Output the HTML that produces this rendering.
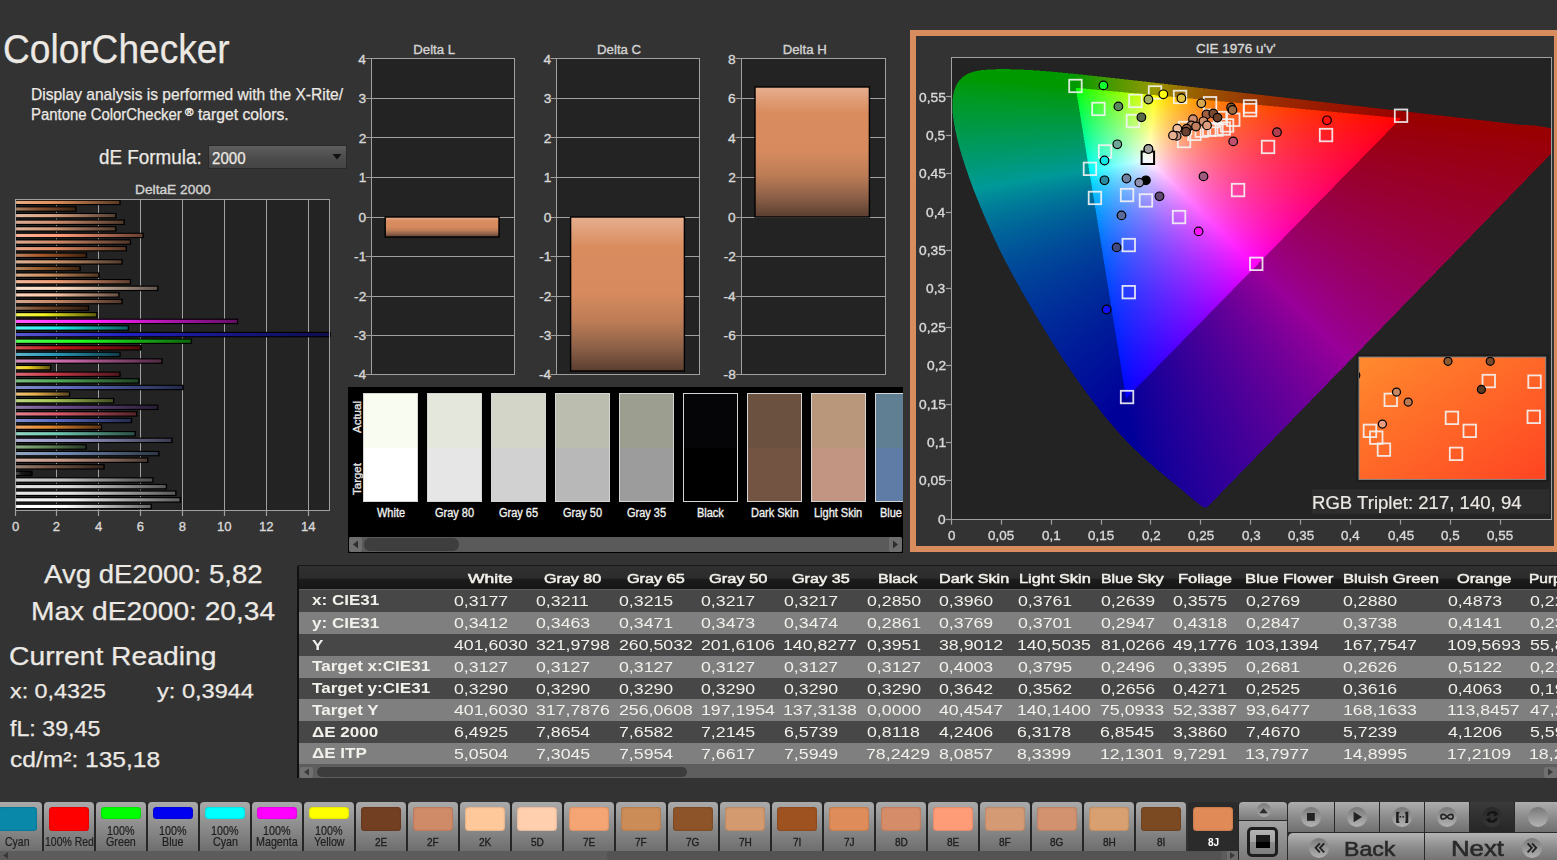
<!DOCTYPE html><html><head><meta charset="utf-8"><style>
html,body{margin:0;padding:0;width:1557px;height:860px;overflow:hidden;background:#333333;}
body{position:relative;font-family:"Liberation Sans",sans-serif;}
.t{position:absolute;white-space:nowrap;transform-origin:0 0;}
.a{position:absolute;}
svg{position:absolute;overflow:visible;}
</style></head><body>
<div class="t" style="left:2.75px;top:27.00px;font-size:40.12px;line-height:45px;color:#ece9e4;transform:scaleX(0.9246);-webkit-text-stroke:0.25px;">ColorChecker</div>
<div class="t" style="left:30.86px;top:83.70px;font-size:17.15px;line-height:20px;color:#ece9e4;transform:scaleX(0.9073);-webkit-text-stroke:0.25px;">Display analysis is performed with the X-Rite/</div>
<div class="t" style="left:30.91px;top:105.80px;font-size:15.84px;line-height:17px;color:#ece9e4;transform:scaleX(0.9417);-webkit-text-stroke:0.25px;">Pantone ColorChecker</div>
<div class="t" style="left:184.59px;top:106.40px;font-size:10.90px;line-height:12px;color:#ece9e4;transform:scaleX(1.0447);-webkit-text-stroke:0.45px;">®</div>
<div class="t" style="left:197.94px;top:105.80px;font-size:15.84px;line-height:17px;color:#ece9e4;transform:scaleX(0.9901);-webkit-text-stroke:0.25px;">target colors.</div>
<div class="t" style="left:99.25px;top:144.70px;font-size:20.64px;line-height:23px;color:#ece9e4;transform:scaleX(0.9144);-webkit-text-stroke:0.25px;">dE Formula:</div>
<div class="a" style="left:208px;top:145px;width:139px;height:24px;background:linear-gradient(#5e5e5e,#4a4a4a 60%,#444);box-sizing:border-box;border:1px solid #2a2a2a;"></div>
<div class="t" style="left:212.25px;top:150.40px;font-size:15.70px;line-height:17px;color:#ece9e4;transform:scaleX(0.9615);-webkit-text-stroke:0.25px;">2000</div>
<svg style="left:0;top:0" width="1" height="1"><polygon points="332.5,154 341.5,154 337,159.5" fill="#111"/></svg>
<div class="t" style="left:134.80px;top:181.90px;font-size:13.37px;line-height:15px;color:#d4d4d4;transform:scaleX(1.0295);-webkit-text-stroke:0.35px;">DeltaE 2000</div>
<svg style="left:0;top:0" width="1557" height="860"><defs><linearGradient id="bg0" x1="0" y1="0" x2="1" y2="0"><stop offset="0" stop-color="#e8ac83"/><stop offset="0.35" stop-color="#e0905a"/><stop offset="1" stop-color="#5a3a24"/></linearGradient><linearGradient id="bg1" x1="0" y1="0" x2="1" y2="0"><stop offset="0" stop-color="#a77f64"/><stop offset="0.35" stop-color="#8a5430"/><stop offset="1" stop-color="#372213"/></linearGradient><linearGradient id="bg2" x1="0" y1="0" x2="1" y2="0"><stop offset="0" stop-color="#e2b8a0"/><stop offset="0.35" stop-color="#d8a080"/><stop offset="1" stop-color="#564033"/></linearGradient><linearGradient id="bg3" x1="0" y1="0" x2="1" y2="0"><stop offset="0" stop-color="#dcac94"/><stop offset="0.35" stop-color="#d09070"/><stop offset="1" stop-color="#533a2d"/></linearGradient><linearGradient id="bg4" x1="0" y1="0" x2="1" y2="0"><stop offset="0" stop-color="#dcb29a"/><stop offset="0.35" stop-color="#d09878"/><stop offset="1" stop-color="#533d30"/></linearGradient><linearGradient id="bg5" x1="0" y1="0" x2="1" y2="0"><stop offset="0" stop-color="#ffb39a"/><stop offset="0.35" stop-color="#ff9a78"/><stop offset="1" stop-color="#663e30"/></linearGradient><linearGradient id="bg6" x1="0" y1="0" x2="1" y2="0"><stop offset="0" stop-color="#dca78e"/><stop offset="0.35" stop-color="#d08a68"/><stop offset="1" stop-color="#53372a"/></linearGradient><linearGradient id="bg7" x1="0" y1="0" x2="1" y2="0"><stop offset="0" stop-color="#e8a788"/><stop offset="0.35" stop-color="#e08a60"/><stop offset="1" stop-color="#5a3726"/></linearGradient><linearGradient id="bg8" x1="0" y1="0" x2="1" y2="0"><stop offset="0" stop-color="#be835e"/><stop offset="0.35" stop-color="#a85a28"/><stop offset="1" stop-color="#432410"/></linearGradient><linearGradient id="bg9" x1="0" y1="0" x2="1" y2="0"><stop offset="0" stop-color="#dcb294"/><stop offset="0.35" stop-color="#d09870"/><stop offset="1" stop-color="#533d2d"/></linearGradient><linearGradient id="bg10" x1="0" y1="0" x2="1" y2="0"><stop offset="0" stop-color="#b38864"/><stop offset="0.35" stop-color="#9a6030"/><stop offset="1" stop-color="#3e2613"/></linearGradient><linearGradient id="bg11" x1="0" y1="0" x2="1" y2="0"><stop offset="0" stop-color="#dcac88"/><stop offset="0.35" stop-color="#d09060"/><stop offset="1" stop-color="#533a26"/></linearGradient><linearGradient id="bg12" x1="0" y1="0" x2="1" y2="0"><stop offset="0" stop-color="#f4b89a"/><stop offset="0.35" stop-color="#f0a078"/><stop offset="1" stop-color="#604030"/></linearGradient><linearGradient id="bg13" x1="0" y1="0" x2="1" y2="0"><stop offset="0" stop-color="#fae2d0"/><stop offset="0.35" stop-color="#f8d8c0"/><stop offset="1" stop-color="#63564d"/></linearGradient><linearGradient id="bg14" x1="0" y1="0" x2="1" y2="0"><stop offset="0" stop-color="#ffd6be"/><stop offset="0.35" stop-color="#ffc8a8"/><stop offset="1" stop-color="#665043"/></linearGradient><linearGradient id="bg15" x1="0" y1="0" x2="1" y2="0"><stop offset="0" stop-color="#d6a78f"/><stop offset="0.35" stop-color="#c88a6a"/><stop offset="1" stop-color="#50372a"/></linearGradient><linearGradient id="bg16" x1="0" y1="0" x2="1" y2="0"><stop offset="0" stop-color="#9b775f"/><stop offset="0.35" stop-color="#7a4a2a"/><stop offset="1" stop-color="#311e11"/></linearGradient><linearGradient id="bg17" x1="0" y1="0" x2="1" y2="0"><stop offset="0" stop-color="#f4f458"/><stop offset="0.35" stop-color="#f0f020"/><stop offset="1" stop-color="#60600d"/></linearGradient><linearGradient id="bg18" x1="0" y1="0" x2="1" y2="0"><stop offset="0" stop-color="#ff58ff"/><stop offset="0.35" stop-color="#ff20ff"/><stop offset="1" stop-color="#660d66"/></linearGradient><linearGradient id="bg19" x1="0" y1="0" x2="1" y2="0"><stop offset="0" stop-color="#58f4f4"/><stop offset="0.35" stop-color="#20f0f0"/><stop offset="1" stop-color="#0d6060"/></linearGradient><linearGradient id="bg20" x1="0" y1="0" x2="1" y2="0"><stop offset="0" stop-color="#5858d0"/><stop offset="0.35" stop-color="#2020c0"/><stop offset="1" stop-color="#0d0d4d"/></linearGradient><linearGradient id="bg21" x1="0" y1="0" x2="1" y2="0"><stop offset="0" stop-color="#58ff58"/><stop offset="0.35" stop-color="#20ff20"/><stop offset="1" stop-color="#0d660d"/></linearGradient><linearGradient id="bg22" x1="0" y1="0" x2="1" y2="0"><stop offset="0" stop-color="#d05252"/><stop offset="0.35" stop-color="#c01818"/><stop offset="1" stop-color="#4d0a0a"/></linearGradient><linearGradient id="bg23" x1="0" y1="0" x2="1" y2="0"><stop offset="0" stop-color="#5fb3ca"/><stop offset="0.35" stop-color="#2a9ab8"/><stop offset="1" stop-color="#113e4a"/></linearGradient><linearGradient id="bg24" x1="0" y1="0" x2="1" y2="0"><stop offset="0" stop-color="#d68ebe"/><stop offset="0.35" stop-color="#c868a8"/><stop offset="1" stop-color="#502a43"/></linearGradient><linearGradient id="bg25" x1="0" y1="0" x2="1" y2="0"><stop offset="0" stop-color="#f4dc58"/><stop offset="0.35" stop-color="#f0d020"/><stop offset="1" stop-color="#60530d"/></linearGradient><linearGradient id="bg26" x1="0" y1="0" x2="1" y2="0"><stop offset="0" stop-color="#d66b76"/><stop offset="0.35" stop-color="#c83a48"/><stop offset="1" stop-color="#50171d"/></linearGradient><linearGradient id="bg27" x1="0" y1="0" x2="1" y2="0"><stop offset="0" stop-color="#7cbe82"/><stop offset="0.35" stop-color="#50a858"/><stop offset="1" stop-color="#204323"/></linearGradient><linearGradient id="bg28" x1="0" y1="0" x2="1" y2="0"><stop offset="0" stop-color="#838eca"/><stop offset="0.35" stop-color="#5a68b8"/><stop offset="1" stop-color="#242a4a"/></linearGradient><linearGradient id="bg29" x1="0" y1="0" x2="1" y2="0"><stop offset="0" stop-color="#eec47c"/><stop offset="0.35" stop-color="#e8b050"/><stop offset="1" stop-color="#5d4620"/></linearGradient><linearGradient id="bg30" x1="0" y1="0" x2="1" y2="0"><stop offset="0" stop-color="#bed682"/><stop offset="0.35" stop-color="#a8c858"/><stop offset="1" stop-color="#435023"/></linearGradient><linearGradient id="bg31" x1="0" y1="0" x2="1" y2="0"><stop offset="0" stop-color="#8f77a6"/><stop offset="0.35" stop-color="#6a4a88"/><stop offset="1" stop-color="#2a1e36"/></linearGradient><linearGradient id="bg32" x1="0" y1="0" x2="1" y2="0"><stop offset="0" stop-color="#e2838f"/><stop offset="0.35" stop-color="#d85a6a"/><stop offset="1" stop-color="#56242a"/></linearGradient><linearGradient id="bg33" x1="0" y1="0" x2="1" y2="0"><stop offset="0" stop-color="#838fd0"/><stop offset="0.35" stop-color="#5a6ac0"/><stop offset="1" stop-color="#242a4d"/></linearGradient><linearGradient id="bg34" x1="0" y1="0" x2="1" y2="0"><stop offset="0" stop-color="#eea764"/><stop offset="0.35" stop-color="#e88a30"/><stop offset="1" stop-color="#5d3713"/></linearGradient><linearGradient id="bg35" x1="0" y1="0" x2="1" y2="0"><stop offset="0" stop-color="#94d6c4"/><stop offset="0.35" stop-color="#70c8b0"/><stop offset="1" stop-color="#2d5046"/></linearGradient><linearGradient id="bg36" x1="0" y1="0" x2="1" y2="0"><stop offset="0" stop-color="#b2b2d6"/><stop offset="0.35" stop-color="#9898c8"/><stop offset="1" stop-color="#3d3d50"/></linearGradient><linearGradient id="bg37" x1="0" y1="0" x2="1" y2="0"><stop offset="0" stop-color="#8fac88"/><stop offset="0.35" stop-color="#6a9060"/><stop offset="1" stop-color="#2a3a26"/></linearGradient><linearGradient id="bg38" x1="0" y1="0" x2="1" y2="0"><stop offset="0" stop-color="#94a6c4"/><stop offset="0.35" stop-color="#7088b0"/><stop offset="1" stop-color="#2d3646"/></linearGradient><linearGradient id="bg39" x1="0" y1="0" x2="1" y2="0"><stop offset="0" stop-color="#d6b3a6"/><stop offset="0.35" stop-color="#c89a88"/><stop offset="1" stop-color="#503e36"/></linearGradient><linearGradient id="bg40" x1="0" y1="0" x2="1" y2="0"><stop offset="0" stop-color="#9b8376"/><stop offset="0.35" stop-color="#7a5a48"/><stop offset="1" stop-color="#31241d"/></linearGradient><linearGradient id="bg41" x1="0" y1="0" x2="1" y2="0"><stop offset="0" stop-color="#525252"/><stop offset="0.35" stop-color="#181818"/><stop offset="1" stop-color="#0a0a0a"/></linearGradient><linearGradient id="bg42" x1="0" y1="0" x2="1" y2="0"><stop offset="0" stop-color="#d0d0d0"/><stop offset="0.35" stop-color="#c0c0c0"/><stop offset="1" stop-color="#4d4d4d"/></linearGradient><linearGradient id="bg43" x1="0" y1="0" x2="1" y2="0"><stop offset="0" stop-color="#e2e2e2"/><stop offset="0.35" stop-color="#d8d8d8"/><stop offset="1" stop-color="#565656"/></linearGradient><linearGradient id="bg44" x1="0" y1="0" x2="1" y2="0"><stop offset="0" stop-color="#e8e8e8"/><stop offset="0.35" stop-color="#e0e0e0"/><stop offset="1" stop-color="#5a5a5a"/></linearGradient><linearGradient id="bg45" x1="0" y1="0" x2="1" y2="0"><stop offset="0" stop-color="#f4f4f4"/><stop offset="0.35" stop-color="#f0f0f0"/><stop offset="1" stop-color="#606060"/></linearGradient><linearGradient id="bg46" x1="0" y1="0" x2="1" y2="0"><stop offset="0" stop-color="#ffffff"/><stop offset="0.35" stop-color="#ffffff"/><stop offset="1" stop-color="#666666"/></linearGradient></defs><rect x="15.5" y="199.4" width="313.9" height="310.9" fill="#232323"/><line x1="56.5" y1="199.5" x2="56.5" y2="510.5" stroke="#a0a0a0" stroke-width="1"/><line x1="98.5" y1="199.5" x2="98.5" y2="510.5" stroke="#a0a0a0" stroke-width="1"/><line x1="140.5" y1="199.5" x2="140.5" y2="510.5" stroke="#a0a0a0" stroke-width="1"/><line x1="182.5" y1="199.5" x2="182.5" y2="510.5" stroke="#a0a0a0" stroke-width="1"/><line x1="224.5" y1="199.5" x2="224.5" y2="510.5" stroke="#a0a0a0" stroke-width="1"/><line x1="266.5" y1="199.5" x2="266.5" y2="510.5" stroke="#a0a0a0" stroke-width="1"/><line x1="308.5" y1="199.5" x2="308.5" y2="510.5" stroke="#a0a0a0" stroke-width="1"/><line x1="15.5" y1="510.5" x2="15.5" y2="516.0" stroke="#a0a0a0" stroke-width="1.2"/><line x1="56.5" y1="510.5" x2="56.5" y2="516.0" stroke="#a0a0a0" stroke-width="1.2"/><line x1="98.5" y1="510.5" x2="98.5" y2="516.0" stroke="#a0a0a0" stroke-width="1.2"/><line x1="140.5" y1="510.5" x2="140.5" y2="516.0" stroke="#a0a0a0" stroke-width="1.2"/><line x1="182.5" y1="510.5" x2="182.5" y2="516.0" stroke="#a0a0a0" stroke-width="1.2"/><line x1="224.5" y1="510.5" x2="224.5" y2="516.0" stroke="#a0a0a0" stroke-width="1.2"/><line x1="266.5" y1="510.5" x2="266.5" y2="516.0" stroke="#a0a0a0" stroke-width="1.2"/><line x1="308.5" y1="510.5" x2="308.5" y2="516.0" stroke="#a0a0a0" stroke-width="1.2"/><rect x="16.10" y="199.65" width="104.60" height="5.5" fill="#000"/><rect x="16.10" y="200.80" width="103.20" height="3.2" fill="url(#bg0)"/><rect x="16.10" y="206.26" width="60.50" height="5.5" fill="#000"/><rect x="16.10" y="207.41" width="59.10" height="3.2" fill="url(#bg1)"/><rect x="16.10" y="212.87" width="100.40" height="5.5" fill="#000"/><rect x="16.10" y="214.02" width="99.00" height="3.2" fill="url(#bg2)"/><rect x="16.10" y="219.48" width="108.80" height="5.5" fill="#000"/><rect x="16.10" y="220.63" width="107.40" height="3.2" fill="url(#bg3)"/><rect x="16.10" y="226.09" width="100.40" height="5.5" fill="#000"/><rect x="16.10" y="227.24" width="99.00" height="3.2" fill="url(#bg4)"/><rect x="16.10" y="232.70" width="127.70" height="5.5" fill="#000"/><rect x="16.10" y="233.85" width="126.30" height="3.2" fill="url(#bg5)"/><rect x="16.10" y="239.31" width="115.10" height="5.5" fill="#000"/><rect x="16.10" y="240.46" width="113.70" height="3.2" fill="url(#bg6)"/><rect x="16.10" y="245.92" width="110.90" height="5.5" fill="#000"/><rect x="16.10" y="247.07" width="109.50" height="3.2" fill="url(#bg7)"/><rect x="16.10" y="252.53" width="71.00" height="5.5" fill="#000"/><rect x="16.10" y="253.68" width="69.60" height="3.2" fill="url(#bg8)"/><rect x="16.10" y="259.14" width="106.70" height="5.5" fill="#000"/><rect x="16.10" y="260.29" width="105.30" height="3.2" fill="url(#bg9)"/><rect x="16.10" y="265.75" width="64.70" height="5.5" fill="#000"/><rect x="16.10" y="266.90" width="63.30" height="3.2" fill="url(#bg10)"/><rect x="16.10" y="272.36" width="83.60" height="5.5" fill="#000"/><rect x="16.10" y="273.51" width="82.20" height="3.2" fill="url(#bg11)"/><rect x="16.10" y="278.97" width="115.10" height="5.5" fill="#000"/><rect x="16.10" y="280.12" width="113.70" height="3.2" fill="url(#bg12)"/><rect x="16.10" y="285.58" width="142.40" height="5.5" fill="#000"/><rect x="16.10" y="286.73" width="141.00" height="3.2" fill="url(#bg13)"/><rect x="16.10" y="292.19" width="103.55" height="5.5" fill="#000"/><rect x="16.10" y="293.34" width="102.15" height="3.2" fill="url(#bg14)"/><rect x="16.10" y="298.80" width="106.70" height="5.5" fill="#000"/><rect x="16.10" y="299.95" width="105.30" height="3.2" fill="url(#bg15)"/><rect x="16.10" y="305.41" width="73.10" height="5.5" fill="#000"/><rect x="16.10" y="306.56" width="71.70" height="3.2" fill="url(#bg16)"/><rect x="16.10" y="312.02" width="81.50" height="5.5" fill="#000"/><rect x="16.10" y="313.17" width="80.10" height="3.2" fill="url(#bg17)"/><rect x="16.10" y="318.63" width="222.20" height="5.5" fill="#000"/><rect x="16.10" y="319.78" width="220.80" height="3.2" fill="url(#bg18)"/><rect x="16.10" y="325.24" width="113.00" height="5.5" fill="#000"/><rect x="16.10" y="326.39" width="111.60" height="3.2" fill="url(#bg19)"/><rect x="16.10" y="331.85" width="314.60" height="5.5" fill="#000"/><rect x="16.10" y="333.00" width="313.20" height="3.2" fill="url(#bg20)"/><rect x="16.10" y="338.46" width="176.00" height="5.5" fill="#000"/><rect x="16.10" y="339.61" width="174.60" height="3.2" fill="url(#bg21)"/><rect x="16.10" y="345.07" width="125.60" height="5.5" fill="#000"/><rect x="16.10" y="346.22" width="124.20" height="3.2" fill="url(#bg22)"/><rect x="16.10" y="351.68" width="104.60" height="5.5" fill="#000"/><rect x="16.10" y="352.83" width="103.20" height="3.2" fill="url(#bg23)"/><rect x="16.10" y="358.29" width="146.60" height="5.5" fill="#000"/><rect x="16.10" y="359.44" width="145.20" height="3.2" fill="url(#bg24)"/><rect x="16.10" y="364.90" width="35.30" height="5.5" fill="#000"/><rect x="16.10" y="366.05" width="33.90" height="3.2" fill="url(#bg25)"/><rect x="16.10" y="371.51" width="104.60" height="5.5" fill="#000"/><rect x="16.10" y="372.66" width="103.20" height="3.2" fill="url(#bg26)"/><rect x="16.10" y="378.12" width="123.50" height="5.5" fill="#000"/><rect x="16.10" y="379.27" width="122.10" height="3.2" fill="url(#bg27)"/><rect x="16.10" y="384.73" width="167.60" height="5.5" fill="#000"/><rect x="16.10" y="385.88" width="166.20" height="3.2" fill="url(#bg28)"/><rect x="16.10" y="391.34" width="54.20" height="5.5" fill="#000"/><rect x="16.10" y="392.49" width="52.80" height="3.2" fill="url(#bg29)"/><rect x="16.10" y="397.95" width="98.30" height="5.5" fill="#000"/><rect x="16.10" y="399.10" width="96.90" height="3.2" fill="url(#bg30)"/><rect x="16.10" y="404.56" width="142.40" height="5.5" fill="#000"/><rect x="16.10" y="405.71" width="141.00" height="3.2" fill="url(#bg31)"/><rect x="16.10" y="411.17" width="121.40" height="5.5" fill="#000"/><rect x="16.10" y="412.32" width="120.00" height="3.2" fill="url(#bg32)"/><rect x="16.10" y="417.78" width="116.15" height="5.5" fill="#000"/><rect x="16.10" y="418.93" width="114.75" height="3.2" fill="url(#bg33)"/><rect x="16.10" y="424.39" width="86.12" height="5.5" fill="#000"/><rect x="16.10" y="425.54" width="84.72" height="3.2" fill="url(#bg34)"/><rect x="16.10" y="431.00" width="119.72" height="5.5" fill="#000"/><rect x="16.10" y="432.15" width="118.32" height="3.2" fill="url(#bg35)"/><rect x="16.10" y="437.61" width="156.47" height="5.5" fill="#000"/><rect x="16.10" y="438.76" width="155.07" height="3.2" fill="url(#bg36)"/><rect x="16.10" y="444.22" width="70.79" height="5.5" fill="#000"/><rect x="16.10" y="445.37" width="69.39" height="3.2" fill="url(#bg37)"/><rect x="16.10" y="450.83" width="143.45" height="5.5" fill="#000"/><rect x="16.10" y="451.98" width="142.05" height="3.2" fill="url(#bg38)"/><rect x="16.10" y="457.44" width="132.32" height="5.5" fill="#000"/><rect x="16.10" y="458.59" width="130.92" height="3.2" fill="url(#bg39)"/><rect x="16.10" y="464.05" width="88.64" height="5.5" fill="#000"/><rect x="16.10" y="465.20" width="87.24" height="3.2" fill="url(#bg40)"/><rect x="16.10" y="470.66" width="16.61" height="5.5" fill="#000"/><rect x="16.10" y="471.81" width="15.21" height="3.2" fill="url(#bg41)"/><rect x="16.10" y="477.27" width="137.57" height="5.5" fill="#000"/><rect x="16.10" y="478.42" width="136.17" height="3.2" fill="url(#bg42)"/><rect x="16.10" y="483.88" width="151.01" height="5.5" fill="#000"/><rect x="16.10" y="485.03" width="149.61" height="3.2" fill="url(#bg43)"/><rect x="16.10" y="490.49" width="160.46" height="5.5" fill="#000"/><rect x="16.10" y="491.64" width="159.06" height="3.2" fill="url(#bg44)"/><rect x="16.10" y="497.10" width="164.87" height="5.5" fill="#000"/><rect x="16.10" y="498.25" width="163.47" height="3.2" fill="url(#bg45)"/><rect x="16.10" y="503.71" width="135.89" height="5.5" fill="#000"/><rect x="16.10" y="504.86" width="134.49" height="3.2" fill="url(#bg46)"/><rect x="15.5" y="199.5" width="314" height="311" fill="none" stroke="#a0a0a0" stroke-width="1"/></svg>
<div class="t" style="left:11.90px;top:519.00px;font-size:13.08px;line-height:15px;color:#d8d8d8;transform:scaleX(1.0000);-webkit-text-stroke:0.35px;">0</div>
<div class="t" style="left:52.84px;top:519.00px;font-size:13.08px;line-height:15px;color:#d8d8d8;transform:scaleX(1.0000);-webkit-text-stroke:0.35px;">2</div>
<div class="t" style="left:94.90px;top:519.00px;font-size:13.08px;line-height:15px;color:#d8d8d8;transform:scaleX(1.0000);-webkit-text-stroke:0.35px;">4</div>
<div class="t" style="left:136.77px;top:519.00px;font-size:13.08px;line-height:15px;color:#d8d8d8;transform:scaleX(1.0000);-webkit-text-stroke:0.35px;">6</div>
<div class="t" style="left:178.84px;top:519.00px;font-size:13.08px;line-height:15px;color:#d8d8d8;transform:scaleX(1.0000);-webkit-text-stroke:0.35px;">8</div>
<div class="t" style="left:216.98px;top:519.00px;font-size:13.08px;line-height:15px;color:#d8d8d8;transform:scaleX(1.0000);-webkit-text-stroke:0.35px;">10</div>
<div class="t" style="left:259.04px;top:519.00px;font-size:13.08px;line-height:15px;color:#d8d8d8;transform:scaleX(1.0000);-webkit-text-stroke:0.35px;">12</div>
<div class="t" style="left:300.91px;top:519.00px;font-size:13.08px;line-height:15px;color:#d8d8d8;transform:scaleX(1.0000);-webkit-text-stroke:0.35px;">14</div>
<svg style="left:0;top:0" width="1557" height="860"><defs><linearGradient id="dl" x1="0" y1="0" x2="0" y2="1"><stop offset="0" stop-color="#e6ae8e"/><stop offset="0.2" stop-color="#d98c5e"/><stop offset="0.5" stop-color="#d68a5e"/><stop offset="0.68" stop-color="#bc7c56"/><stop offset="0.85" stop-color="#8c6048"/><stop offset="1" stop-color="#5a3e30"/></linearGradient></defs><rect x="371.6" y="58.6" width="142.9" height="315.4" fill="#232323"/><line x1="365.5" y1="58.5" x2="514.5" y2="58.5" stroke="#a0a0a0" stroke-width="1"/><line x1="365.5" y1="98.5" x2="514.5" y2="98.5" stroke="#a0a0a0" stroke-width="1"/><line x1="365.5" y1="137.5" x2="514.5" y2="137.5" stroke="#a0a0a0" stroke-width="1"/><line x1="365.5" y1="177.5" x2="514.5" y2="177.5" stroke="#a0a0a0" stroke-width="1"/><line x1="365.5" y1="217.5" x2="514.5" y2="217.5" stroke="#a0a0a0" stroke-width="1"/><line x1="365.5" y1="256.5" x2="514.5" y2="256.5" stroke="#a0a0a0" stroke-width="1"/><line x1="365.5" y1="296.5" x2="514.5" y2="296.5" stroke="#a0a0a0" stroke-width="1"/><line x1="365.5" y1="335.5" x2="514.5" y2="335.5" stroke="#a0a0a0" stroke-width="1"/><line x1="365.5" y1="374.5" x2="514.5" y2="374.5" stroke="#a0a0a0" stroke-width="1"/><rect x="385.2" y="217.0" width="113.8" height="20.0" fill="url(#dl)" stroke="#000" stroke-width="1.4"/><rect x="371.5" y="58.5" width="143.0" height="316.0" fill="none" stroke="#a0a0a0" stroke-width="1"/></svg>
<div class="t" style="left:413.25px;top:41.90px;font-size:13.23px;line-height:15px;color:#d4d4d4;transform:scaleX(1.0000);-webkit-text-stroke:0.35px;">Delta L</div>
<div class="t" style="left:358.36px;top:51.50px;font-size:13.66px;line-height:15px;color:#d8d8d8;transform:scaleX(1.0000);-webkit-text-stroke:0.35px;">4</div>
<div class="t" style="left:358.50px;top:91.00px;font-size:13.66px;line-height:15px;color:#d8d8d8;transform:scaleX(1.0000);-webkit-text-stroke:0.35px;">3</div>
<div class="t" style="left:358.63px;top:130.70px;font-size:13.66px;line-height:15px;color:#d8d8d8;transform:scaleX(1.0000);-webkit-text-stroke:0.35px;">2</div>
<div class="t" style="left:358.63px;top:170.10px;font-size:13.66px;line-height:15px;color:#d8d8d8;transform:scaleX(1.0000);-webkit-text-stroke:0.35px;">1</div>
<div class="t" style="left:358.50px;top:209.80px;font-size:13.66px;line-height:15px;color:#d8d8d8;transform:scaleX(1.0000);-webkit-text-stroke:0.35px;">0</div>
<div class="t" style="left:354.12px;top:249.30px;font-size:13.66px;line-height:15px;color:#d8d8d8;transform:scaleX(1.0000);-webkit-text-stroke:0.35px;">-1</div>
<div class="t" style="left:354.12px;top:289.00px;font-size:13.66px;line-height:15px;color:#d8d8d8;transform:scaleX(1.0000);-webkit-text-stroke:0.35px;">-2</div>
<div class="t" style="left:353.99px;top:328.40px;font-size:13.66px;line-height:15px;color:#d8d8d8;transform:scaleX(1.0000);-webkit-text-stroke:0.35px;">-3</div>
<div class="t" style="left:353.85px;top:366.90px;font-size:13.66px;line-height:15px;color:#d8d8d8;transform:scaleX(1.0000);-webkit-text-stroke:0.35px;">-4</div>
<svg style="left:0;top:0" width="1557" height="860"><defs><linearGradient id="dc" x1="0" y1="0" x2="0" y2="1"><stop offset="0" stop-color="#e6ae8e"/><stop offset="0.2" stop-color="#d98c5e"/><stop offset="0.5" stop-color="#d68a5e"/><stop offset="0.68" stop-color="#bc7c56"/><stop offset="0.85" stop-color="#8c6048"/><stop offset="1" stop-color="#5a3e30"/></linearGradient></defs><rect x="556.8" y="58.6" width="142.2" height="315.4" fill="#232323"/><line x1="550.5" y1="58.5" x2="699.5" y2="58.5" stroke="#a0a0a0" stroke-width="1"/><line x1="550.5" y1="98.5" x2="699.5" y2="98.5" stroke="#a0a0a0" stroke-width="1"/><line x1="550.5" y1="137.5" x2="699.5" y2="137.5" stroke="#a0a0a0" stroke-width="1"/><line x1="550.5" y1="177.5" x2="699.5" y2="177.5" stroke="#a0a0a0" stroke-width="1"/><line x1="550.5" y1="217.5" x2="699.5" y2="217.5" stroke="#a0a0a0" stroke-width="1"/><line x1="550.5" y1="256.5" x2="699.5" y2="256.5" stroke="#a0a0a0" stroke-width="1"/><line x1="550.5" y1="296.5" x2="699.5" y2="296.5" stroke="#a0a0a0" stroke-width="1"/><line x1="550.5" y1="335.5" x2="699.5" y2="335.5" stroke="#a0a0a0" stroke-width="1"/><line x1="550.5" y1="374.5" x2="699.5" y2="374.5" stroke="#a0a0a0" stroke-width="1"/><rect x="570.6" y="217.0" width="113.8" height="154.0" fill="url(#dc)" stroke="#000" stroke-width="1.4"/><rect x="556.5" y="58.5" width="143.0" height="316.0" fill="none" stroke="#a0a0a0" stroke-width="1"/></svg>
<div class="t" style="left:597.05px;top:41.90px;font-size:13.23px;line-height:15px;color:#d4d4d4;transform:scaleX(1.0000);-webkit-text-stroke:0.35px;">Delta C</div>
<div class="t" style="left:543.56px;top:51.50px;font-size:13.66px;line-height:15px;color:#d8d8d8;transform:scaleX(1.0000);-webkit-text-stroke:0.35px;">4</div>
<div class="t" style="left:543.70px;top:91.00px;font-size:13.66px;line-height:15px;color:#d8d8d8;transform:scaleX(1.0000);-webkit-text-stroke:0.35px;">3</div>
<div class="t" style="left:543.83px;top:130.70px;font-size:13.66px;line-height:15px;color:#d8d8d8;transform:scaleX(1.0000);-webkit-text-stroke:0.35px;">2</div>
<div class="t" style="left:543.83px;top:170.10px;font-size:13.66px;line-height:15px;color:#d8d8d8;transform:scaleX(1.0000);-webkit-text-stroke:0.35px;">1</div>
<div class="t" style="left:543.70px;top:209.80px;font-size:13.66px;line-height:15px;color:#d8d8d8;transform:scaleX(1.0000);-webkit-text-stroke:0.35px;">0</div>
<div class="t" style="left:539.32px;top:249.30px;font-size:13.66px;line-height:15px;color:#d8d8d8;transform:scaleX(1.0000);-webkit-text-stroke:0.35px;">-1</div>
<div class="t" style="left:539.32px;top:289.00px;font-size:13.66px;line-height:15px;color:#d8d8d8;transform:scaleX(1.0000);-webkit-text-stroke:0.35px;">-2</div>
<div class="t" style="left:539.19px;top:328.40px;font-size:13.66px;line-height:15px;color:#d8d8d8;transform:scaleX(1.0000);-webkit-text-stroke:0.35px;">-3</div>
<div class="t" style="left:539.05px;top:366.90px;font-size:13.66px;line-height:15px;color:#d8d8d8;transform:scaleX(1.0000);-webkit-text-stroke:0.35px;">-4</div>
<svg style="left:0;top:0" width="1557" height="860"><defs><linearGradient id="dh" x1="0" y1="0" x2="0" y2="1"><stop offset="0" stop-color="#e6ae8e"/><stop offset="0.2" stop-color="#d98c5e"/><stop offset="0.5" stop-color="#d68a5e"/><stop offset="0.68" stop-color="#bc7c56"/><stop offset="0.85" stop-color="#8c6048"/><stop offset="1" stop-color="#5a3e30"/></linearGradient></defs><rect x="741.2" y="58.6" width="144.1" height="315.4" fill="#232323"/><line x1="735.5" y1="58.5" x2="885.5" y2="58.5" stroke="#a0a0a0" stroke-width="1"/><line x1="735.5" y1="98.5" x2="885.5" y2="98.5" stroke="#a0a0a0" stroke-width="1"/><line x1="735.5" y1="137.5" x2="885.5" y2="137.5" stroke="#a0a0a0" stroke-width="1"/><line x1="735.5" y1="177.5" x2="885.5" y2="177.5" stroke="#a0a0a0" stroke-width="1"/><line x1="735.5" y1="217.5" x2="885.5" y2="217.5" stroke="#a0a0a0" stroke-width="1"/><line x1="735.5" y1="256.5" x2="885.5" y2="256.5" stroke="#a0a0a0" stroke-width="1"/><line x1="735.5" y1="296.5" x2="885.5" y2="296.5" stroke="#a0a0a0" stroke-width="1"/><line x1="735.5" y1="335.5" x2="885.5" y2="335.5" stroke="#a0a0a0" stroke-width="1"/><line x1="735.5" y1="374.5" x2="885.5" y2="374.5" stroke="#a0a0a0" stroke-width="1"/><rect x="755.0" y="87.0" width="114.4" height="130.0" fill="url(#dh)" stroke="#000" stroke-width="1.4"/><rect x="741.5" y="58.5" width="144.0" height="316.0" fill="none" stroke="#a0a0a0" stroke-width="1"/></svg>
<div class="t" style="left:782.66px;top:41.90px;font-size:13.23px;line-height:15px;color:#d4d4d4;transform:scaleX(1.0000);-webkit-text-stroke:0.35px;">Delta H</div>
<div class="t" style="left:728.10px;top:51.50px;font-size:13.66px;line-height:15px;color:#d8d8d8;transform:scaleX(1.0000);-webkit-text-stroke:0.35px;">8</div>
<div class="t" style="left:728.10px;top:91.00px;font-size:13.66px;line-height:15px;color:#d8d8d8;transform:scaleX(1.0000);-webkit-text-stroke:0.35px;">6</div>
<div class="t" style="left:727.96px;top:130.70px;font-size:13.66px;line-height:15px;color:#d8d8d8;transform:scaleX(1.0000);-webkit-text-stroke:0.35px;">4</div>
<div class="t" style="left:728.23px;top:170.10px;font-size:13.66px;line-height:15px;color:#d8d8d8;transform:scaleX(1.0000);-webkit-text-stroke:0.35px;">2</div>
<div class="t" style="left:728.10px;top:209.80px;font-size:13.66px;line-height:15px;color:#d8d8d8;transform:scaleX(1.0000);-webkit-text-stroke:0.35px;">0</div>
<div class="t" style="left:723.72px;top:249.30px;font-size:13.66px;line-height:15px;color:#d8d8d8;transform:scaleX(1.0000);-webkit-text-stroke:0.35px;">-2</div>
<div class="t" style="left:723.45px;top:289.00px;font-size:13.66px;line-height:15px;color:#d8d8d8;transform:scaleX(1.0000);-webkit-text-stroke:0.35px;">-4</div>
<div class="t" style="left:723.59px;top:328.40px;font-size:13.66px;line-height:15px;color:#d8d8d8;transform:scaleX(1.0000);-webkit-text-stroke:0.35px;">-6</div>
<div class="t" style="left:723.59px;top:366.90px;font-size:13.66px;line-height:15px;color:#d8d8d8;transform:scaleX(1.0000);-webkit-text-stroke:0.35px;">-8</div>
<div class="t" style="left:44.10px;top:560.00px;font-size:25.58px;line-height:28px;color:#ece9e4;transform:scaleX(1.0771);-webkit-text-stroke:0.25px;">Avg dE2000: 5,82</div>
<div class="t" style="left:30.75px;top:595.80px;font-size:26.45px;line-height:30px;color:#ece9e4;transform:scaleX(1.0648);-webkit-text-stroke:0.25px;">Max dE2000: 20,34</div>
<div class="t" style="left:9.19px;top:642.30px;font-size:25.58px;line-height:28px;color:#ece9e4;transform:scaleX(1.1051);-webkit-text-stroke:0.25px;">Current Reading</div>
<div class="t" style="left:10.37px;top:678.90px;font-size:21.08px;line-height:23px;color:#ece9e4;transform:scaleX(1.1063);-webkit-text-stroke:0.25px;">x: 0,4325</div>
<div class="t" style="left:157.00px;top:678.90px;font-size:21.08px;line-height:23px;color:#ece9e4;transform:scaleX(1.1183);-webkit-text-stroke:0.25px;">y: 0,3944</div>
<div class="t" style="left:10.37px;top:716.60px;font-size:21.51px;line-height:24px;color:#ece9e4;transform:scaleX(1.0795);-webkit-text-stroke:0.25px;">fL: 39,45</div>
<div class="t" style="left:9.62px;top:746.10px;font-size:22.67px;line-height:26px;color:#ece9e4;transform:scaleX(1.0836);-webkit-text-stroke:0.25px;">cd/m²: 135,18</div>
<div class="a" style="left:348px;top:387px;width:555px;height:166px;background:#000;overflow:hidden;">
<div class="a" style="left:15.3px;top:6.2px;width:55px;height:109.3px;box-sizing:border-box;border:1px solid #d4d4d4;background:linear-gradient(#f9fcf1 0,#f9fcf1 50%,#ffffff 50%,#ffffff 100%);"></div>
<div class="a" style="left:79.2px;top:6.2px;width:55px;height:109.3px;box-sizing:border-box;border:1px solid #d4d4d4;background:linear-gradient(#e4e7dc 0,#e4e7dc 50%,#e6e6e6 50%,#e6e6e6 100%);"></div>
<div class="a" style="left:143.2px;top:6.2px;width:55px;height:109.3px;box-sizing:border-box;border:1px solid #d4d4d4;background:linear-gradient(#d2d5c7 0,#d2d5c7 50%,#d1d1d1 50%,#d1d1d1 100%);"></div>
<div class="a" style="left:207.2px;top:6.2px;width:55px;height:109.3px;box-sizing:border-box;border:1px solid #d4d4d4;background:linear-gradient(#bbbeaf 0,#bbbeaf 50%,#b8b8b8 50%,#b8b8b8 100%);"></div>
<div class="a" style="left:271.1px;top:6.2px;width:55px;height:109.3px;box-sizing:border-box;border:1px solid #d4d4d4;background:linear-gradient(#9c9e8f 0,#9c9e8f 50%,#9c9c9c 50%,#9c9c9c 100%);"></div>
<div class="a" style="left:335.0px;top:6.2px;width:55px;height:109.3px;box-sizing:border-box;border:1px solid #d4d4d4;background:linear-gradient(#050508 0,#050508 50%,#000000 50%,#000000 100%);"></div>
<div class="a" style="left:399.0px;top:6.2px;width:55px;height:109.3px;box-sizing:border-box;border:1px solid #d4d4d4;background:linear-gradient(#6b5140 0,#6b5140 50%,#735443 50%,#735443 100%);"></div>
<div class="a" style="left:463.0px;top:6.2px;width:55px;height:109.3px;box-sizing:border-box;border:1px solid #d4d4d4;background:linear-gradient(#b9977a 0,#b9977a 50%,#c29583 50%,#c29583 100%);"></div>
<div class="a" style="left:526.9px;top:6.2px;width:55px;height:109.3px;box-sizing:border-box;border:1px solid #d4d4d4;background:linear-gradient(#617f93 0,#617f93 50%,#5e7ca6 50%,#5e7ca6 100%);"></div>
</div>
<div class="a" style="left:0;top:0;width:1557px;height:860px;clip-path:inset(387px 654.3px 307px 348px);">
<div class="t" style="left:376.95px;top:505.80px;font-size:12.21px;line-height:14px;color:#f0f0f0;transform:scaleX(0.9000);-webkit-text-stroke:0.35px;">White</div>
<div class="t" style="left:435.14px;top:505.80px;font-size:12.21px;line-height:14px;color:#f0f0f0;transform:scaleX(0.9000);-webkit-text-stroke:0.35px;">Gray 80</div>
<div class="t" style="left:499.09px;top:505.80px;font-size:12.21px;line-height:14px;color:#f0f0f0;transform:scaleX(0.9000);-webkit-text-stroke:0.35px;">Gray 65</div>
<div class="t" style="left:563.04px;top:505.80px;font-size:12.21px;line-height:14px;color:#f0f0f0;transform:scaleX(0.9000);-webkit-text-stroke:0.35px;">Gray 50</div>
<div class="t" style="left:626.99px;top:505.80px;font-size:12.21px;line-height:14px;color:#f0f0f0;transform:scaleX(0.9000);-webkit-text-stroke:0.35px;">Gray 35</div>
<div class="t" style="left:696.59px;top:505.80px;font-size:12.21px;line-height:14px;color:#f0f0f0;transform:scaleX(0.9000);-webkit-text-stroke:0.35px;">Black</div>
<div class="t" style="left:750.55px;top:505.80px;font-size:12.21px;line-height:14px;color:#f0f0f0;transform:scaleX(0.9000);-webkit-text-stroke:0.35px;">Dark Skin</div>
<div class="t" style="left:814.17px;top:505.80px;font-size:12.21px;line-height:14px;color:#f0f0f0;transform:scaleX(0.9000);-webkit-text-stroke:0.35px;">Light Skin</div>
<div class="t" style="left:880.26px;top:505.80px;font-size:12.21px;line-height:14px;color:#f0f0f0;transform:scaleX(0.9000);-webkit-text-stroke:0.35px;">Blue Sky</div>
</div>
<div class="t" style="left:351.5px;top:433.3px;font-size:11.5px;line-height:11.5px;color:#e8e8e8;transform:rotate(-90deg) scaleX(1.0);transform-origin:0 0;-webkit-text-stroke:0.3px;">Actual</div>
<div class="t" style="left:351.5px;top:495.3px;font-size:11.5px;line-height:11.5px;color:#e8e8e8;transform:rotate(-90deg) scaleX(1.0);transform-origin:0 0;-webkit-text-stroke:0.3px;">Target</div>
<div class="a" style="left:349px;top:537px;width:553px;height:15px;background:#5a5a5a;border-radius:2px;"></div>
<div class="a" style="left:349px;top:537px;width:13px;height:15px;background:#6e6e6e;border-radius:2px;"></div>
<div class="a" style="left:364px;top:538px;width:95px;height:13px;background:#3e3e3e;border-radius:6px;"></div>
<div class="a" style="left:889px;top:537px;width:13px;height:15px;background:#6e6e6e;border-radius:2px;"></div>
<svg style="left:0;top:0" width="1" height="1"><polygon points="358,540.5 358,548.5 353,544.5" fill="#2e2e2e"/><polygon points="893,540.5 893,548.5 898,544.5" fill="#2e2e2e"/></svg>
<div class="a" style="left:910px;top:29.5px;width:650.3px;height:522.5px;box-sizing:border-box;border:6.5px solid rgb(217,140,94);background:#333333;"></div>
<div class="a" style="left:951.3px;top:57.5px;width:600.4px;height:461.7px;background:#232323;"></div>
<canvas id="cie" class="a" width="1202" height="924" style="left:951.3px;top:57.5px;width:601px;height:462px;"></canvas>
<noscript><svg style="left:0;top:0" width="1557" height="860"><defs><linearGradient id="fl" x1="0" y1="0" x2="0" y2="1"><stop offset="0" stop-color="#009a00"/><stop offset="0.35" stop-color="#00908a"/><stop offset="1" stop-color="#0000a0"/></linearGradient><linearGradient id="fp" x1="0" y1="1" x2="1" y2="0"><stop offset="0" stop-color="#2a00a0"/><stop offset="0.5" stop-color="#8a0090"/><stop offset="1" stop-color="#a00010"/></linearGradient><radialGradient id="ft" cx="0.25" cy="0.3" r="0.8"><stop offset="0" stop-color="#ffffff"/><stop offset="0.5" stop-color="#ff80ff"/><stop offset="1" stop-color="#ff0040"/></radialGradient><clipPath id="fc"><rect x="951.3" y="57.5" width="600.4" height="461.7"/></clipPath></defs><g clip-path="url(#fc)"><polygon points="1207.7,506.5 1207.5,506.6 1207.3,506.7 1207.0,506.9 1206.6,507.0 1206.1,507.0 1205.4,507.0 1204.4,506.7 1203.1,506.2 1201.9,505.5 1200.5,504.5 1198.9,503.3 1197.0,501.8 1194.7,500.0 1192.0,497.7 1189.0,495.2 1185.6,492.3 1181.9,489.2 1177.6,485.7 1172.6,481.6 1167.0,477.0 1161.0,472.0 1154.3,466.4 1146.9,459.9 1138.7,452.3 1129.9,443.8 1120.0,433.2 1108.2,419.6 1095.1,403.3 1080.9,384.1 1065.8,362.3 1050.0,337.7 1034.0,311.3 1018.2,283.8 1003.3,256.1 990.5,228.9 979.4,203.1 970.3,179.5 963.2,158.5 958.1,140.5 954.8,125.3 953.0,112.6 952.7,102.2 953.7,93.4 955.9,86.3 959.3,80.6 963.6,76.2 968.6,73.1 974.4,71.1 980.6,69.8 987.3,69.2 994.2,68.8 1001.3,68.7 1008.3,68.7 1015.5,68.9 1022.9,69.2 1030.4,69.6 1038.3,70.1 1046.4,70.7 1054.9,71.5 1063.8,72.3 1073.1,73.2 1082.9,74.2 1093.3,75.3 1104.2,76.5 1115.6,77.8 1127.6,79.1 1140.3,80.5 1153.6,82.0 1167.5,83.6 1182.1,85.3 1197.3,87.1 1213.2,88.9 1229.7,90.8 1246.8,92.8 1264.4,94.8 1282.3,96.8 1300.5,98.9 1318.8,101.0 1336.6,103.1 1354.1,105.1 1371.6,107.1 1388.5,109.0 1404.6,110.9 1419.7,112.6 1434.0,114.2 1447.3,115.8 1459.5,117.2 1470.7,118.5 1481.0,119.7 1490.4,120.7 1499.0,121.7 1506.9,122.6 1514.2,123.5 1521.3,124.3 1528.9,124.7 1536.4,125.2 1543.9,126.4 1550.8,127.7 1556.1,128.3 1561.2,128.9 1568.1,129.7 1573.7,130.3" fill="url(#fl)"/><polygon points="1126.4,398.0 1207.7,506.5 1570.3,135.3 1401.3,117.7" fill="url(#fp)"/><polygon points="1076.1,87.3 1401.3,117.7 1126.4,398.0" fill="url(#ft)"/></g></svg></noscript>
<div class="t" style="left:1195.52px;top:41.00px;font-size:12.94px;line-height:15px;color:#d8d8d8;transform:scaleX(1.0441);-webkit-text-stroke:0.35px;">CIE 1976 u'v'</div>
<script>
(function(){
var c=document.getElementById('cie'); if(!c||!c.getContext) return; var g=c.getContext('2d');
var W=c.width,H=c.height; var img=g.createImageData(W,H); var d=img.data;
var L=[[0.2568, 0.01659], [0.25677, 0.01656], [0.25672, 0.01651], [0.25666, 0.01645], [0.25659, 0.01639], [0.25651, 0.01632], [0.25642, 0.01627], [0.25632, 0.01621], [0.25622, 0.01614], [0.25611, 0.01608], [0.25598, 0.01602], [0.25585, 0.01597], [0.2557, 0.01594], [0.25554, 0.0159], [0.25539, 0.01587], [0.25522, 0.01585], [0.25503, 0.01585], [0.2548, 0.01587], [0.25453, 0.01593], [0.25422, 0.01602], [0.25385, 0.01613], [0.25346, 0.01627], [0.25305, 0.01643], [0.25262, 0.01664], [0.25221, 0.01688], [0.2518, 0.01717], [0.2514, 0.01749], [0.25098, 0.01785], [0.25056, 0.01824], [0.2501, 0.01867], [0.24962, 0.01913], [0.2491, 0.01962], [0.24857, 0.02013], [0.24802, 0.02068], [0.24743, 0.02128], [0.2468, 0.02192], [0.24612, 0.02262], [0.24538, 0.02338], [0.2446, 0.0242], [0.24377, 0.02506], [0.2429, 0.02598], [0.242, 0.02694], [0.24106, 0.02795], [0.2401, 0.02901], [0.2391, 0.03011], [0.23806, 0.03127], [0.23699, 0.03247], [0.23586, 0.03372], [0.23469, 0.03501], [0.23347, 0.03633], [0.23222, 0.03769], [0.23092, 0.03908], [0.22957, 0.04054], [0.22814, 0.04207], [0.22663, 0.04368], [0.22504, 0.04538], [0.22337, 0.04715], [0.22164, 0.04899], [0.21984, 0.0509], [0.21797, 0.05289], [0.21606, 0.05495], [0.2141, 0.05705], [0.21209, 0.0592], [0.21002, 0.06142], [0.20787, 0.06374], [0.20565, 0.06618], [0.20334, 0.06878], [0.20094, 0.0715], [0.19846, 0.07432], [0.19591, 0.07726], [0.19327, 0.08035], [0.19054, 0.08363], [0.18772, 0.08711], [0.18485, 0.09071], [0.18193, 0.09438], [0.17892, 0.09824], [0.17579, 0.10238], [0.17248, 0.10691], [0.16896, 0.11195], [0.16522, 0.11746], [0.16129, 0.12337], [0.15718, 0.12968], [0.15293, 0.13638], [0.14856, 0.14348], [0.14408, 0.15098], [0.13947, 0.1589], [0.13471, 0.16723], [0.12982, 0.17597], [0.12484, 0.18508], [0.11979, 0.19455], [0.11469, 0.20437], [0.10951, 0.21463], [0.10421, 0.22536], [0.09884, 0.23645], [0.09344, 0.24779], [0.08809, 0.25929], [0.08282, 0.27083], [0.07756, 0.28253], [0.07225, 0.29449], [0.06698, 0.3066], [0.06182, 0.31875], [0.05685, 0.33081], [0.05213, 0.34269], [0.04766, 0.35448], [0.04336, 0.3663], [0.03925, 0.37804], [0.03533, 0.38959], [0.03163, 0.40084], [0.02816, 0.41168], [0.02491, 0.42217], [0.02187, 0.43242], [0.01905, 0.44237], [0.01645, 0.45196], [0.01406, 0.46114], [0.01189, 0.46984], [0.00996, 0.47806], [0.00827, 0.48584], [0.00679, 0.49321], [0.00552, 0.50018], [0.00442, 0.50679], [0.00347, 0.51307], [0.0027, 0.51895], [0.00213, 0.52442], [0.00173, 0.52952], [0.00149, 0.53431], [0.0014, 0.53884], [0.00144, 0.54316], [0.00162, 0.54724], [0.00195, 0.55103], [0.00244, 0.55456], [0.00305, 0.55786], [0.00379, 0.56094], [0.00464, 0.56384], [0.00562, 0.56654], [0.00674, 0.56902], [0.00799, 0.57128], [0.00934, 0.57335], [0.01078, 0.57524], [0.01228, 0.57697], [0.01388, 0.57851], [0.01558, 0.57983], [0.01737, 0.58098], [0.01923, 0.58198], [0.02115, 0.58287], [0.02312, 0.58367], [0.02513, 0.58435], [0.02722, 0.58487], [0.02936, 0.58528], [0.03155, 0.58561], [0.03377, 0.58589], [0.03601, 0.58614], [0.03828, 0.58636], [0.0406, 0.58652], [0.04295, 0.58662], [0.04532, 0.58668], [0.04769, 0.58672], [0.05006, 0.58675], [0.05242, 0.58677], [0.05478, 0.58676], [0.05714, 0.58673], [0.05952, 0.58668], [0.06192, 0.58661], [0.06434, 0.58652], [0.06677, 0.58642], [0.06921, 0.58629], [0.07167, 0.58615], [0.07415, 0.58599], [0.07667, 0.58581], [0.07922, 0.58562], [0.08182, 0.58541], [0.08444, 0.58518], [0.08709, 0.58494], [0.08978, 0.58468], [0.0925, 0.5844], [0.09527, 0.58411], [0.09807, 0.58381], [0.10091, 0.58349], [0.10379, 0.58315], [0.10671, 0.58281], [0.10968, 0.58244], [0.1127, 0.58207], [0.11577, 0.58168], [0.11888, 0.58128], [0.12204, 0.58087], [0.12525, 0.58044], [0.12852, 0.58], [0.13186, 0.57955], [0.13525, 0.57909], [0.1387, 0.57862], [0.14221, 0.57813], [0.14578, 0.57763], [0.14941, 0.57712], [0.1531, 0.57659], [0.15686, 0.57605], [0.16067, 0.5755], [0.16455, 0.57494], [0.16849, 0.57437], [0.1725, 0.57378], [0.17659, 0.57318], [0.18075, 0.57257], [0.18497, 0.57196], [0.18927, 0.57133], [0.19364, 0.57068], [0.19808, 0.57003], [0.2026, 0.56936], [0.20718, 0.56868], [0.21183, 0.56799], [0.21656, 0.56729], [0.22136, 0.56657], [0.22623, 0.56585], [0.23117, 0.56511], [0.23619, 0.56436], [0.24128, 0.5636], [0.24644, 0.56282], [0.25167, 0.56204], [0.25698, 0.56124], [0.26234, 0.56044], [0.26778, 0.55963], [0.27329, 0.5588], [0.27888, 0.55797], [0.28452, 0.55712], [0.29021, 0.55627], [0.29596, 0.55541], [0.30176, 0.55455], [0.30763, 0.55367], [0.31356, 0.55279], [0.31953, 0.5519], [0.32552, 0.55101], [0.33153, 0.55012], [0.33757, 0.54921], [0.34367, 0.54829], [0.3498, 0.54737], [0.35593, 0.54645], [0.36202, 0.54553], [0.36806, 0.54463], [0.37404, 0.54373], [0.37998, 0.54284], [0.3859, 0.54196], [0.39178, 0.54108], [0.39764, 0.54021], [0.40347, 0.53933], [0.40931, 0.53846], [0.41515, 0.53759], [0.42097, 0.53672], [0.42673, 0.53586], [0.4324, 0.53501], [0.43794, 0.53419], [0.44338, 0.53338], [0.44873, 0.53259], [0.45399, 0.53181], [0.45915, 0.53105], [0.46421, 0.5303], [0.46917, 0.52956], [0.47403, 0.52884], [0.47879, 0.52812], [0.48345, 0.52742], [0.48801, 0.52674], [0.49245, 0.52607], [0.49677, 0.52542], [0.50096, 0.52479], [0.50504, 0.52418], [0.50901, 0.52358], [0.51286, 0.523], [0.51661, 0.52244], [0.52026, 0.52189], [0.52379, 0.52137], [0.52721, 0.52086], [0.53052, 0.52037], [0.53374, 0.5199], [0.53687, 0.51943], [0.53992, 0.51898], [0.54289, 0.51853], [0.54576, 0.5181], [0.54854, 0.51769], [0.55125, 0.51728], [0.5539, 0.51688], [0.5565, 0.51649], [0.55902, 0.5161], [0.56143, 0.51571], [0.56378, 0.51533], [0.56611, 0.51497], [0.56846, 0.51463], [0.57088, 0.51433], [0.57337, 0.5141], [0.57591, 0.51393], [0.57848, 0.51379], [0.58104, 0.51363], [0.58358, 0.51342], [0.58608, 0.51311], [0.58857, 0.51268], [0.59109, 0.51213], [0.59359, 0.51154], [0.59602, 0.51094], [0.59834, 0.51039], [0.6005, 0.50993], [0.60244, 0.50958], [0.60418, 0.5093], [0.60581, 0.50907], [0.60741, 0.50885], [0.60907, 0.50863], [0.61088, 0.50837], [0.61299, 0.50805], [0.61536, 0.5077], [0.61778, 0.50733], [0.62007, 0.50699], [0.62201, 0.5067], [0.62339, 0.50649]];
var poly=L;
var SU=998.400*2, SV=767.800*2, V0=461.700*2, OUT=0.600;
var T=[[0.125,0.5625],[0.4507,0.5229],[0.1754,0.1579]];
function ed(a,b,u,v){return (b[0]-a[0])*(v-a[1])-(b[1]-a[1])*(u-a[0]);}
function GM(x){return Math.pow(x,0.8);}
function gm(x){return x<=0.0031308?12.92*x:1.055*Math.pow(x,1/2.4)-0.055;}
for(var py=0;py<H;py++){
  var v=(V0-(py+0.5))/SV; var xs=[];
  for(var i=0;i<poly.length;i++){var a=poly[i],b=poly[(i+1)%poly.length];
    if((a[1]<=v&&b[1]>v)||(b[1]<=v&&a[1]>v)){var t=(v-a[1])/(b[1]-a[1]); xs.push(a[0]+t*(b[0]-a[0]));}}
  xs.sort(function(p,q){return p-q;});
  for(var k=0;k+1<xs.length;k+=2){
    var x0=Math.max(0,Math.ceil(xs[k]*SU-0.5)), x1=Math.min(W-1,Math.floor(xs[k+1]*SU-0.5));
    for(var px=x0;px<=x1;px++){
      var u=(px+0.5)/SU; var den=6*u-16*v+12; var x=9*u/den, y=4*v/den;
      var X=x/y, Z=(1-x-y)/y;
      var r=3.2406*X-1.5372-0.4986*Z, gg=-0.9689*X+1.8758+0.0415*Z, bb=0.0557*X-0.2040+1.0570*Z;
      if(r<0)r=0; if(gg<0)gg=0; if(bb<0)bb=0; var m=Math.max(r,gg,bb); if(m<=0)m=1;
      r=GM(r/m); gg=GM(gg/m); bb=GM(bb/m);
      var e1=ed(T[0],T[1],u,v), e2=ed(T[1],T[2],u,v), e3=ed(T[2],T[0],u,v);
      var ins=(e1<=0&&e2<=0&&e3<=0)||(e1>=0&&e2>=0&&e3>=0);
      var f=ins?1:OUT;
      var o=(py*W+px)*4; d[o]=r*f*255; d[o+1]=gg*f*255; d[o+2]=bb*f*255; d[o+3]=255;
    }
  }
}
g.putImageData(img,0,0);
})();
</script>
<svg style="left:0;top:0" width="1557" height="860"><rect x="951.5" y="57.5" width="600.0" height="462.0" fill="none" stroke="#a0a0a0" stroke-width="1"/><line x1="951.5" y1="519.5" x2="951.5" y2="524.7" stroke="#a0a0a0" stroke-width="1.2"/><line x1="945.8" y1="519.5" x2="951.5" y2="519.5" stroke="#a0a0a0" stroke-width="1.2"/><line x1="1001.5" y1="519.5" x2="1001.5" y2="524.7" stroke="#a0a0a0" stroke-width="1.2"/><line x1="945.8" y1="480.5" x2="951.5" y2="480.5" stroke="#a0a0a0" stroke-width="1.2"/><line x1="1051.5" y1="519.5" x2="1051.5" y2="524.7" stroke="#a0a0a0" stroke-width="1.2"/><line x1="945.8" y1="442.5" x2="951.5" y2="442.5" stroke="#a0a0a0" stroke-width="1.2"/><line x1="1101.5" y1="519.5" x2="1101.5" y2="524.7" stroke="#a0a0a0" stroke-width="1.2"/><line x1="945.8" y1="404.5" x2="951.5" y2="404.5" stroke="#a0a0a0" stroke-width="1.2"/><line x1="1150.5" y1="519.5" x2="1150.5" y2="524.7" stroke="#a0a0a0" stroke-width="1.2"/><line x1="945.8" y1="365.5" x2="951.5" y2="365.5" stroke="#a0a0a0" stroke-width="1.2"/><line x1="1200.5" y1="519.5" x2="1200.5" y2="524.7" stroke="#a0a0a0" stroke-width="1.2"/><line x1="945.8" y1="327.5" x2="951.5" y2="327.5" stroke="#a0a0a0" stroke-width="1.2"/><line x1="1250.5" y1="519.5" x2="1250.5" y2="524.7" stroke="#a0a0a0" stroke-width="1.2"/><line x1="945.8" y1="288.5" x2="951.5" y2="288.5" stroke="#a0a0a0" stroke-width="1.2"/><line x1="1300.5" y1="519.5" x2="1300.5" y2="524.7" stroke="#a0a0a0" stroke-width="1.2"/><line x1="945.8" y1="250.5" x2="951.5" y2="250.5" stroke="#a0a0a0" stroke-width="1.2"/><line x1="1350.5" y1="519.5" x2="1350.5" y2="524.7" stroke="#a0a0a0" stroke-width="1.2"/><line x1="945.8" y1="212.5" x2="951.5" y2="212.5" stroke="#a0a0a0" stroke-width="1.2"/><line x1="1400.5" y1="519.5" x2="1400.5" y2="524.7" stroke="#a0a0a0" stroke-width="1.2"/><line x1="945.8" y1="173.5" x2="951.5" y2="173.5" stroke="#a0a0a0" stroke-width="1.2"/><line x1="1450.5" y1="519.5" x2="1450.5" y2="524.7" stroke="#a0a0a0" stroke-width="1.2"/><line x1="945.8" y1="135.5" x2="951.5" y2="135.5" stroke="#a0a0a0" stroke-width="1.2"/><line x1="1500.5" y1="519.5" x2="1500.5" y2="524.7" stroke="#a0a0a0" stroke-width="1.2"/><line x1="945.8" y1="96.5" x2="951.5" y2="96.5" stroke="#a0a0a0" stroke-width="1.2"/></svg>
<div class="t" style="left:947.61px;top:528.80px;font-size:12.20px;line-height:14px;color:#d8d8d8;transform:scaleX(1.1000);-webkit-text-stroke:0.35px;">0</div>
<div class="t" style="left:937.93px;top:512.80px;font-size:12.20px;line-height:14px;color:#d8d8d8;transform:scaleX(1.1300);-webkit-text-stroke:0.35px;">0</div>
<div class="t" style="left:988.20px;top:528.80px;font-size:12.20px;line-height:14px;color:#d8d8d8;transform:scaleX(1.1000);-webkit-text-stroke:0.35px;">0,05</div>
<div class="t" style="left:918.77px;top:474.41px;font-size:12.20px;line-height:14px;color:#d8d8d8;transform:scaleX(1.1300);-webkit-text-stroke:0.35px;">0,05</div>
<div class="t" style="left:1041.95px;top:528.80px;font-size:12.20px;line-height:14px;color:#d8d8d8;transform:scaleX(1.1000);-webkit-text-stroke:0.35px;">0,1</div>
<div class="t" style="left:926.63px;top:436.02px;font-size:12.20px;line-height:14px;color:#d8d8d8;transform:scaleX(1.1300);-webkit-text-stroke:0.35px;">0,1</div>
<div class="t" style="left:1088.04px;top:528.80px;font-size:12.20px;line-height:14px;color:#d8d8d8;transform:scaleX(1.1000);-webkit-text-stroke:0.35px;">0,15</div>
<div class="t" style="left:918.77px;top:397.63px;font-size:12.20px;line-height:14px;color:#d8d8d8;transform:scaleX(1.1300);-webkit-text-stroke:0.35px;">0,15</div>
<div class="t" style="left:1141.79px;top:528.80px;font-size:12.20px;line-height:14px;color:#d8d8d8;transform:scaleX(1.1000);-webkit-text-stroke:0.35px;">0,2</div>
<div class="t" style="left:926.63px;top:359.24px;font-size:12.20px;line-height:14px;color:#d8d8d8;transform:scaleX(1.1300);-webkit-text-stroke:0.35px;">0,2</div>
<div class="t" style="left:1187.88px;top:528.80px;font-size:12.20px;line-height:14px;color:#d8d8d8;transform:scaleX(1.1000);-webkit-text-stroke:0.35px;">0,25</div>
<div class="t" style="left:918.77px;top:320.85px;font-size:12.20px;line-height:14px;color:#d8d8d8;transform:scaleX(1.1300);-webkit-text-stroke:0.35px;">0,25</div>
<div class="t" style="left:1241.56px;top:528.80px;font-size:12.20px;line-height:14px;color:#d8d8d8;transform:scaleX(1.1000);-webkit-text-stroke:0.35px;">0,3</div>
<div class="t" style="left:926.49px;top:282.46px;font-size:12.20px;line-height:14px;color:#d8d8d8;transform:scaleX(1.1300);-webkit-text-stroke:0.35px;">0,3</div>
<div class="t" style="left:1287.72px;top:528.80px;font-size:12.20px;line-height:14px;color:#d8d8d8;transform:scaleX(1.1000);-webkit-text-stroke:0.35px;">0,35</div>
<div class="t" style="left:918.77px;top:244.07px;font-size:12.20px;line-height:14px;color:#d8d8d8;transform:scaleX(1.1300);-webkit-text-stroke:0.35px;">0,35</div>
<div class="t" style="left:1341.33px;top:528.80px;font-size:12.20px;line-height:14px;color:#d8d8d8;transform:scaleX(1.1000);-webkit-text-stroke:0.35px;">0,4</div>
<div class="t" style="left:926.35px;top:205.68px;font-size:12.20px;line-height:14px;color:#d8d8d8;transform:scaleX(1.1300);-webkit-text-stroke:0.35px;">0,4</div>
<div class="t" style="left:1387.56px;top:528.80px;font-size:12.20px;line-height:14px;color:#d8d8d8;transform:scaleX(1.1000);-webkit-text-stroke:0.35px;">0,45</div>
<div class="t" style="left:918.77px;top:167.29px;font-size:12.20px;line-height:14px;color:#d8d8d8;transform:scaleX(1.1300);-webkit-text-stroke:0.35px;">0,45</div>
<div class="t" style="left:1441.24px;top:528.80px;font-size:12.20px;line-height:14px;color:#d8d8d8;transform:scaleX(1.1000);-webkit-text-stroke:0.35px;">0,5</div>
<div class="t" style="left:926.49px;top:128.90px;font-size:12.20px;line-height:14px;color:#d8d8d8;transform:scaleX(1.1300);-webkit-text-stroke:0.35px;">0,5</div>
<div class="t" style="left:1487.40px;top:528.80px;font-size:12.20px;line-height:14px;color:#d8d8d8;transform:scaleX(1.1000);-webkit-text-stroke:0.35px;">0,55</div>
<div class="t" style="left:918.77px;top:90.51px;font-size:12.20px;line-height:14px;color:#d8d8d8;transform:scaleX(1.1300);-webkit-text-stroke:0.35px;">0,55</div>
<svg style="left:0;top:0" width="1557" height="860"><defs><clipPath id="pc"><rect x="951.3" y="57.5" width="600.4" height="461.7"/></clipPath></defs><g clip-path="url(#pc)"><rect x="1069.2" y="79.7" width="12.5" height="12.5" fill="none" stroke="#f4f4f4" stroke-opacity="0.9" stroke-width="1.8"/><rect x="1092.2" y="102.7" width="12.5" height="12.5" fill="none" stroke="#f4f4f4" stroke-opacity="0.9" stroke-width="1.8"/><rect x="1129.2" y="94.7" width="12.5" height="12.5" fill="none" stroke="#f4f4f4" stroke-opacity="0.9" stroke-width="1.8"/><rect x="1148.8" y="86.2" width="12.5" height="12.5" fill="none" stroke="#f4f4f4" stroke-opacity="0.9" stroke-width="1.8"/><rect x="1126.7" y="114.8" width="12.5" height="12.5" fill="none" stroke="#f4f4f4" stroke-opacity="0.9" stroke-width="1.8"/><rect x="1098.8" y="145.2" width="12.5" height="12.5" fill="none" stroke="#f4f4f4" stroke-opacity="0.9" stroke-width="1.8"/><rect x="1173.8" y="90.7" width="12.5" height="12.5" fill="none" stroke="#f4f4f4" stroke-opacity="0.9" stroke-width="1.8"/><rect x="1203.8" y="97.0" width="12.5" height="12.5" fill="none" stroke="#f4f4f4" stroke-opacity="0.9" stroke-width="1.8"/><rect x="1243.8" y="100.2" width="12.5" height="12.5" fill="none" stroke="#f4f4f4" stroke-opacity="0.9" stroke-width="1.8"/><rect x="1243.8" y="103.8" width="12.5" height="12.5" fill="none" stroke="#f4f4f4" stroke-opacity="0.9" stroke-width="1.8"/><rect x="1083.7" y="162.6" width="12.5" height="12.5" fill="none" stroke="#f4f4f4" stroke-opacity="0.9" stroke-width="1.8"/><rect x="1088.7" y="191.7" width="12.5" height="12.5" fill="none" stroke="#f4f4f4" stroke-opacity="0.9" stroke-width="1.8"/><rect x="1120.8" y="188.8" width="12.5" height="12.5" fill="none" stroke="#f4f4f4" stroke-opacity="0.9" stroke-width="1.8"/><rect x="1139.7" y="194.2" width="12.5" height="12.5" fill="none" stroke="#f4f4f4" stroke-opacity="0.9" stroke-width="1.8"/><rect x="1172.8" y="210.8" width="12.5" height="12.5" fill="none" stroke="#f4f4f4" stroke-opacity="0.9" stroke-width="1.8"/><rect x="1231.8" y="183.8" width="12.5" height="12.5" fill="none" stroke="#f4f4f4" stroke-opacity="0.9" stroke-width="1.8"/><rect x="1261.8" y="140.7" width="12.5" height="12.5" fill="none" stroke="#f4f4f4" stroke-opacity="0.9" stroke-width="1.8"/><rect x="1319.8" y="128.8" width="12.5" height="12.5" fill="none" stroke="#f4f4f4" stroke-opacity="0.9" stroke-width="1.8"/><rect x="1394.8" y="109.5" width="12.5" height="12.5" fill="none" stroke="#f4f4f4" stroke-opacity="0.9" stroke-width="1.8"/><rect x="1122.5" y="238.8" width="12.5" height="12.5" fill="none" stroke="#f4f4f4" stroke-opacity="0.9" stroke-width="1.8"/><rect x="1122.5" y="285.9" width="12.5" height="12.5" fill="none" stroke="#f4f4f4" stroke-opacity="0.9" stroke-width="1.8"/><rect x="1250.0" y="257.6" width="12.5" height="12.5" fill="none" stroke="#f4f4f4" stroke-opacity="0.9" stroke-width="1.8"/><rect x="1120.8" y="390.8" width="12.5" height="12.5" fill="none" stroke="#f4f4f4" stroke-opacity="0.9" stroke-width="1.8"/><rect x="1227.0" y="113.5" width="12.5" height="12.5" fill="none" stroke="#f4f4f4" stroke-opacity="0.9" stroke-width="1.8"/><rect x="1220.8" y="119.2" width="12.5" height="12.5" fill="none" stroke="#f4f4f4" stroke-opacity="0.9" stroke-width="1.8"/><rect x="1217.5" y="122.3" width="12.5" height="12.5" fill="none" stroke="#f4f4f4" stroke-opacity="0.9" stroke-width="1.8"/><rect x="1210.2" y="123.3" width="12.5" height="12.5" fill="none" stroke="#f4f4f4" stroke-opacity="0.9" stroke-width="1.8"/><rect x="1203.0" y="123.3" width="12.5" height="12.5" fill="none" stroke="#f4f4f4" stroke-opacity="0.9" stroke-width="1.8"/><rect x="1195.5" y="124.4" width="12.5" height="12.5" fill="none" stroke="#f4f4f4" stroke-opacity="0.9" stroke-width="1.8"/><rect x="1188.2" y="127.6" width="12.5" height="12.5" fill="none" stroke="#f4f4f4" stroke-opacity="0.9" stroke-width="1.8"/><rect x="1177.8" y="134.8" width="12.5" height="12.5" fill="none" stroke="#f4f4f4" stroke-opacity="0.9" stroke-width="1.8"/><rect x="1178.8" y="121.8" width="12.5" height="12.5" fill="none" stroke="#f4f4f4" stroke-opacity="0.9" stroke-width="1.8"/><rect x="1206.8" y="114.8" width="12.5" height="12.5" fill="none" stroke="#f4f4f4" stroke-opacity="0.9" stroke-width="1.8"/><rect x="1213.8" y="111.8" width="12.5" height="12.5" fill="none" stroke="#f4f4f4" stroke-opacity="0.9" stroke-width="1.8"/><circle cx="1103.4" cy="85.4" r="4.3" fill="#10ff30" stroke="#000" stroke-width="1.2"/><circle cx="1118.4" cy="106.4" r="4.3" fill="#5a8a5a" stroke="#000" stroke-width="1.2"/><circle cx="1148.4" cy="99.5" r="4.3" fill="#a0b060" stroke="#000" stroke-width="1.2"/><circle cx="1163.3" cy="94.3" r="4.3" fill="#ffff10" stroke="#000" stroke-width="1.2"/><circle cx="1141.4" cy="117.3" r="4.3" fill="#5a6a48" stroke="#000" stroke-width="1.2"/><circle cx="1117.3" cy="144.3" r="4.3" fill="#70a898" stroke="#000" stroke-width="1.2"/><circle cx="1148.4" cy="149.0" r="4.3" fill="#a0a0a0" stroke="#000" stroke-width="1.2"/><circle cx="1181.4" cy="98.2" r="4.3" fill="#e0c040" stroke="#000" stroke-width="1.2"/><circle cx="1201.3" cy="103.3" r="4.3" fill="#d8a850" stroke="#000" stroke-width="1.2"/><circle cx="1231.1" cy="107.5" r="4.3" fill="#8a5a30" stroke="#000" stroke-width="1.2"/><circle cx="1232.5" cy="110.0" r="4.3" fill="#9a6a40" stroke="#000" stroke-width="1.2"/><circle cx="1206.5" cy="114.5" r="4.3" fill="#a06040" stroke="#000" stroke-width="1.2"/><circle cx="1213.3" cy="113.4" r="4.3" fill="#7a4a30" stroke="#000" stroke-width="1.2"/><circle cx="1217.5" cy="117.6" r="4.3" fill="#6a4028" stroke="#000" stroke-width="1.2"/><circle cx="1193.0" cy="119.2" r="4.3" fill="#d09070" stroke="#000" stroke-width="1.2"/><circle cx="1191.4" cy="125.4" r="4.3" fill="#c08060" stroke="#000" stroke-width="1.2"/><circle cx="1196.0" cy="126.5" r="4.3" fill="#c08060" stroke="#000" stroke-width="1.2"/><circle cx="1186.7" cy="128.6" r="4.3" fill="#9a6040" stroke="#000" stroke-width="1.2"/><circle cx="1186.0" cy="131.7" r="4.3" fill="#6a4030" stroke="#000" stroke-width="1.2"/><circle cx="1203.4" cy="121.3" r="4.3" fill="#d09070" stroke="#000" stroke-width="1.2"/><circle cx="1207.0" cy="125.4" r="4.3" fill="#e0a080" stroke="#000" stroke-width="1.2"/><circle cx="1177.3" cy="128.6" r="4.3" fill="#f0c0a0" stroke="#000" stroke-width="1.2"/><circle cx="1176.7" cy="135.9" r="4.3" fill="#c09080" stroke="#000" stroke-width="1.2"/><circle cx="1173.0" cy="135.4" r="4.3" fill="#e8b090" stroke="#000" stroke-width="1.2"/><circle cx="1277.0" cy="132.2" r="4.3" fill="#b04050" stroke="#000" stroke-width="1.2"/><circle cx="1233.2" cy="141.4" r="4.3" fill="#c05070" stroke="#000" stroke-width="1.2"/><circle cx="1327.0" cy="120.3" r="4.3" fill="#ff1010" stroke="#000" stroke-width="1.2"/><circle cx="1104.5" cy="160.5" r="4.3" fill="#10e8e8" stroke="#000" stroke-width="1.2"/><circle cx="1104.5" cy="180.3" r="4.3" fill="#2a8aa0" stroke="#000" stroke-width="1.2"/><circle cx="1126.5" cy="178.5" r="4.3" fill="#7080a0" stroke="#000" stroke-width="1.2"/><circle cx="1145.9" cy="180.3" r="4.3" fill="#000000" stroke="#000" stroke-width="1.2"/><circle cx="1139.3" cy="182.6" r="4.3" fill="#9090b0" stroke="#000" stroke-width="1.2"/><circle cx="1159.5" cy="196.3" r="4.3" fill="#604870" stroke="#000" stroke-width="1.2"/><circle cx="1121.5" cy="215.4" r="4.3" fill="#5a6a9a" stroke="#000" stroke-width="1.2"/><circle cx="1203.5" cy="176.4" r="4.3" fill="#a05a80" stroke="#000" stroke-width="1.2"/><circle cx="1198.6" cy="231.4" r="4.3" fill="#ff10ff" stroke="#000" stroke-width="1.2"/><circle cx="1116.6" cy="247.4" r="4.3" fill="#404a80" stroke="#000" stroke-width="1.2"/><circle cx="1106.6" cy="309.5" r="4.3" fill="#1010f0" stroke="#000" stroke-width="1.2"/><rect x="1141.6" y="151.5" width="12.5" height="12.5" fill="#f4f4f4" fill-opacity="0.4" stroke="#000" stroke-width="2"/><circle cx="1148.4" cy="149" r="4.3" fill="#a0a0a0" stroke="#000" stroke-width="1.2"/><rect x="1356.3" y="354.4" width="192.5" height="127.6" fill="#1c1c1c"/><defs><linearGradient id="ins" x1="0" y1="0" x2="1" y2="1"><stop offset="0" stop-color="#ff8a2e"/><stop offset="1" stop-color="#ff4422"/></linearGradient></defs><rect x="1359" y="357.1" width="186.7" height="122.3" fill="url(#ins)" stroke="#8a8a8a" stroke-width="1"/><clipPath id="ic"><rect x="1359" y="357.1" width="186.7" height="122.3"/></clipPath><g clip-path="url(#ic)"><rect x="1482.5" y="374.8" width="12.5" height="12.5" fill="none" stroke="#f4f4f4" stroke-opacity="0.9" stroke-width="1.8"/><rect x="1528.3" y="375.4" width="12.5" height="12.5" fill="none" stroke="#f4f4f4" stroke-opacity="0.9" stroke-width="1.8"/><rect x="1384.5" y="393.6" width="12.5" height="12.5" fill="none" stroke="#f4f4f4" stroke-opacity="0.9" stroke-width="1.8"/><rect x="1445.7" y="411.6" width="12.5" height="12.5" fill="none" stroke="#f4f4f4" stroke-opacity="0.9" stroke-width="1.8"/><rect x="1527.5" y="410.6" width="12.5" height="12.5" fill="none" stroke="#f4f4f4" stroke-opacity="0.9" stroke-width="1.8"/><rect x="1363.7" y="424.6" width="12.5" height="12.5" fill="none" stroke="#f4f4f4" stroke-opacity="0.9" stroke-width="1.8"/><rect x="1463.5" y="424.6" width="12.5" height="12.5" fill="none" stroke="#f4f4f4" stroke-opacity="0.9" stroke-width="1.8"/><rect x="1370.0" y="431.4" width="12.5" height="12.5" fill="none" stroke="#f4f4f4" stroke-opacity="0.9" stroke-width="1.8"/><rect x="1377.7" y="443.4" width="12.5" height="12.5" fill="none" stroke="#f4f4f4" stroke-opacity="0.9" stroke-width="1.8"/><rect x="1449.8" y="447.6" width="12.5" height="12.5" fill="none" stroke="#f4f4f4" stroke-opacity="0.9" stroke-width="1.8"/><circle cx="1448.0" cy="361.3" r="4.0" fill="#8a5a30" stroke="#000" stroke-width="1.2"/><circle cx="1490.2" cy="361.3" r="4.0" fill="#7a4a2a" stroke="#000" stroke-width="1.2"/><circle cx="1355.8" cy="375.3" r="4.0" fill="#a06040" stroke="#000" stroke-width="1.2"/><circle cx="1481.4" cy="389.4" r="4.0" fill="#5a3a20" stroke="#000" stroke-width="1.2"/><circle cx="1396.5" cy="392.1" r="4.0" fill="#c88860" stroke="#000" stroke-width="1.2"/><circle cx="1408.2" cy="402.1" r="4.0" fill="#b87850" stroke="#000" stroke-width="1.2"/><circle cx="1382.4" cy="424.1" r="4.0" fill="#e8a080" stroke="#000" stroke-width="1.2"/></g><rect x="1311.9" y="489.2" width="237.5" height="24.7" fill="#2d2d2d"/></g></svg>
<div class="t" style="left:1311.61px;top:491.90px;font-size:19.04px;line-height:21px;color:#ece9e4;transform:scaleX(0.9757);-webkit-text-stroke:0.2px;">RGB Triplet: 217, 140, 94</div>
<div class="a" style="left:297.5px;top:565.8px;width:1260px;height:212.5px;background:#5c5c5c;"></div>
<div class="a" style="left:297.5px;top:565.8px;width:1260px;height:23.4px;background:linear-gradient(#303030 0,#2c2c2c 54%,#1c1c1c 55%,#161616 100%);"></div>
<div class="a" style="left:299.2px;top:589.6px;width:1258px;height:22.0px;background:#474747;"></div>
<div class="a" style="left:299.2px;top:611.6px;width:1258px;height:22.4px;background:#7f7f7f;"></div>
<div class="a" style="left:299.2px;top:634.0px;width:1258px;height:21.6px;background:#474747;"></div>
<div class="a" style="left:299.2px;top:655.6px;width:1258px;height:22.0px;background:#7f7f7f;"></div>
<div class="a" style="left:299.2px;top:677.6px;width:1258px;height:21.6px;background:#474747;"></div>
<div class="a" style="left:299.2px;top:699.2px;width:1258px;height:22.0px;background:#7f7f7f;"></div>
<div class="a" style="left:299.2px;top:721.2px;width:1258px;height:21.6px;background:#474747;"></div>
<div class="a" style="left:299.2px;top:742.8px;width:1258px;height:21.7px;background:#7f7f7f;"></div>
<div class="a" style="left:296.8px;top:565.8px;width:2.4px;height:212.5px;background:#101010;"></div>
<div class="a" style="left:297.5px;top:565px;width:1260px;height:1.2px;background:#181818;"></div>
<div class="a" style="left:299.2px;top:764.5px;width:1258px;height:13.7px;background:#5e5e5e;"></div>
<div class="a" style="left:299.5px;top:766.5px;width:13px;height:11px;background:#707070;border-radius:2px;"></div>
<div class="a" style="left:317px;top:766.5px;width:370px;height:10.5px;background:#3c3c3c;border-radius:5px;"></div>
<div class="a" style="left:1544px;top:766.8px;width:13px;height:11px;background:#707070;border-radius:2px;"></div>
<svg style="left:0;top:0" width="1" height="1"><polygon points="309,768.5 309,775.5 304,772" fill="#3a3a3a"/><polygon points="1548,768.5 1548,775.5 1553,772" fill="#3a3a3a"/></svg>
<div class="t" style="left:312.30px;top:592.40px;font-size:14.10px;line-height:16px;color:#f2f0ea;font-weight:bold;transform:scaleX(1.2100);">x: CIE31</div>
<div class="t" style="left:312.30px;top:614.60px;font-size:14.10px;line-height:16px;color:#f2f0ea;font-weight:bold;transform:scaleX(1.2100);">y: CIE31</div>
<div class="t" style="left:312.13px;top:636.60px;font-size:14.10px;line-height:16px;color:#f2f0ea;font-weight:bold;transform:scaleX(1.2100);">Y</div>
<div class="t" style="left:312.13px;top:658.40px;font-size:14.10px;line-height:16px;color:#f2f0ea;font-weight:bold;transform:scaleX(1.2100);">Target x:CIE31</div>
<div class="t" style="left:312.13px;top:680.20px;font-size:14.10px;line-height:16px;color:#f2f0ea;font-weight:bold;transform:scaleX(1.2100);">Target y:CIE31</div>
<div class="t" style="left:312.13px;top:702.00px;font-size:14.10px;line-height:16px;color:#f2f0ea;font-weight:bold;transform:scaleX(1.2100);">Target Y</div>
<div class="t" style="left:311.62px;top:723.80px;font-size:14.10px;line-height:16px;color:#f2f0ea;font-weight:bold;transform:scaleX(1.2100);">ΔE 2000</div>
<div class="t" style="left:311.62px;top:745.45px;font-size:14.10px;line-height:16px;color:#f2f0ea;font-weight:bold;transform:scaleX(1.2100);">ΔE ITP</div>
<div class="a" style="left:0;top:0;width:1557px;height:860px;overflow:hidden;">
<div class="t" style="left:468.30px;top:571.90px;font-size:12.65px;line-height:14px;color:#f2f0ea;transform:scaleX(1.3839);-webkit-text-stroke:0.5px;">White</div>
<div class="t" style="left:544.19px;top:571.90px;font-size:12.65px;line-height:14px;color:#f2f0ea;transform:scaleX(1.2739);-webkit-text-stroke:0.5px;">Gray 80</div>
<div class="t" style="left:626.59px;top:571.90px;font-size:12.65px;line-height:14px;color:#f2f0ea;transform:scaleX(1.2831);-webkit-text-stroke:0.5px;">Gray 65</div>
<div class="t" style="left:708.98px;top:571.90px;font-size:12.65px;line-height:14px;color:#f2f0ea;transform:scaleX(1.3013);-webkit-text-stroke:0.5px;">Gray 50</div>
<div class="t" style="left:791.69px;top:571.90px;font-size:12.65px;line-height:14px;color:#f2f0ea;transform:scaleX(1.2831);-webkit-text-stroke:0.5px;">Gray 35</div>
<div class="t" style="left:878.11px;top:571.90px;font-size:12.65px;line-height:14px;color:#f2f0ea;transform:scaleX(1.2726);-webkit-text-stroke:0.5px;">Black</div>
<div class="t" style="left:939.10px;top:571.90px;font-size:12.65px;line-height:14px;color:#f2f0ea;transform:scaleX(1.2804);-webkit-text-stroke:0.5px;">Dark Skin</div>
<div class="t" style="left:1019.09px;top:571.90px;font-size:12.65px;line-height:14px;color:#f2f0ea;transform:scaleX(1.2920);-webkit-text-stroke:0.5px;">Light Skin</div>
<div class="t" style="left:1100.73px;top:571.90px;font-size:12.65px;line-height:14px;color:#f2f0ea;transform:scaleX(1.2567);-webkit-text-stroke:0.5px;">Blue Sky</div>
<div class="t" style="left:1177.68px;top:571.90px;font-size:12.65px;line-height:14px;color:#f2f0ea;transform:scaleX(1.3013);-webkit-text-stroke:0.5px;">Foliage</div>
<div class="t" style="left:1245.16px;top:571.90px;font-size:12.65px;line-height:14px;color:#f2f0ea;transform:scaleX(1.3226);-webkit-text-stroke:0.5px;">Blue Flower</div>
<div class="t" style="left:1342.57px;top:571.90px;font-size:12.65px;line-height:14px;color:#f2f0ea;transform:scaleX(1.3138);-webkit-text-stroke:0.5px;">Bluish Green</div>
<div class="t" style="left:1456.55px;top:571.90px;font-size:12.65px;line-height:14px;color:#f2f0ea;transform:scaleX(1.2905);-webkit-text-stroke:0.5px;">Orange</div>
<div class="t" style="left:1529.26px;top:571.90px;font-size:12.65px;line-height:14px;color:#f2f0ea;transform:scaleX(1.2242);-webkit-text-stroke:0.5px;">Purplish Blue</div>
<div class="t" style="left:453.97px;top:592.70px;font-size:14.90px;line-height:16px;color:#f2f0ea;transform:scaleX(1.1900);">0,3177</div>
<div class="t" style="left:536.27px;top:592.70px;font-size:14.90px;line-height:16px;color:#f2f0ea;transform:scaleX(1.1900);">0,3211</div>
<div class="t" style="left:619.07px;top:592.70px;font-size:14.90px;line-height:16px;color:#f2f0ea;transform:scaleX(1.1900);">0,3215</div>
<div class="t" style="left:701.47px;top:592.70px;font-size:14.90px;line-height:16px;color:#f2f0ea;transform:scaleX(1.1900);">0,3217</div>
<div class="t" style="left:783.87px;top:592.70px;font-size:14.90px;line-height:16px;color:#f2f0ea;transform:scaleX(1.1900);">0,3217</div>
<div class="t" style="left:866.67px;top:592.70px;font-size:14.90px;line-height:16px;color:#f2f0ea;transform:scaleX(1.1900);">0,2850</div>
<div class="t" style="left:939.07px;top:592.70px;font-size:14.90px;line-height:16px;color:#f2f0ea;transform:scaleX(1.1900);">0,3960</div>
<div class="t" style="left:1017.67px;top:592.70px;font-size:14.90px;line-height:16px;color:#f2f0ea;transform:scaleX(1.1900);">0,3761</div>
<div class="t" style="left:1100.77px;top:592.70px;font-size:14.90px;line-height:16px;color:#f2f0ea;transform:scaleX(1.1900);">0,2639</div>
<div class="t" style="left:1173.17px;top:592.70px;font-size:14.90px;line-height:16px;color:#f2f0ea;transform:scaleX(1.1900);">0,3575</div>
<div class="t" style="left:1245.97px;top:592.70px;font-size:14.90px;line-height:16px;color:#f2f0ea;transform:scaleX(1.1900);">0,2769</div>
<div class="t" style="left:1343.37px;top:592.70px;font-size:14.90px;line-height:16px;color:#f2f0ea;transform:scaleX(1.1900);">0,2880</div>
<div class="t" style="left:1447.87px;top:592.70px;font-size:14.90px;line-height:16px;color:#f2f0ea;transform:scaleX(1.1900);">0,4873</div>
<div class="t" style="left:1529.97px;top:592.70px;font-size:14.90px;line-height:16px;color:#f2f0ea;transform:scaleX(1.1900);">0,2248</div>
<div class="t" style="left:453.97px;top:614.90px;font-size:14.90px;line-height:16px;color:#f2f0ea;transform:scaleX(1.1900);">0,3412</div>
<div class="t" style="left:536.27px;top:614.90px;font-size:14.90px;line-height:16px;color:#f2f0ea;transform:scaleX(1.1900);">0,3463</div>
<div class="t" style="left:619.07px;top:614.90px;font-size:14.90px;line-height:16px;color:#f2f0ea;transform:scaleX(1.1900);">0,3471</div>
<div class="t" style="left:701.47px;top:614.90px;font-size:14.90px;line-height:16px;color:#f2f0ea;transform:scaleX(1.1900);">0,3473</div>
<div class="t" style="left:783.87px;top:614.90px;font-size:14.90px;line-height:16px;color:#f2f0ea;transform:scaleX(1.1900);">0,3474</div>
<div class="t" style="left:866.67px;top:614.90px;font-size:14.90px;line-height:16px;color:#f2f0ea;transform:scaleX(1.1900);">0,2861</div>
<div class="t" style="left:939.07px;top:614.90px;font-size:14.90px;line-height:16px;color:#f2f0ea;transform:scaleX(1.1900);">0,3769</div>
<div class="t" style="left:1017.67px;top:614.90px;font-size:14.90px;line-height:16px;color:#f2f0ea;transform:scaleX(1.1900);">0,3701</div>
<div class="t" style="left:1100.77px;top:614.90px;font-size:14.90px;line-height:16px;color:#f2f0ea;transform:scaleX(1.1900);">0,2947</div>
<div class="t" style="left:1173.17px;top:614.90px;font-size:14.90px;line-height:16px;color:#f2f0ea;transform:scaleX(1.1900);">0,4318</div>
<div class="t" style="left:1245.97px;top:614.90px;font-size:14.90px;line-height:16px;color:#f2f0ea;transform:scaleX(1.1900);">0,2847</div>
<div class="t" style="left:1343.37px;top:614.90px;font-size:14.90px;line-height:16px;color:#f2f0ea;transform:scaleX(1.1900);">0,3738</div>
<div class="t" style="left:1447.87px;top:614.90px;font-size:14.90px;line-height:16px;color:#f2f0ea;transform:scaleX(1.1900);">0,4141</div>
<div class="t" style="left:1529.97px;top:614.90px;font-size:14.90px;line-height:16px;color:#f2f0ea;transform:scaleX(1.1900);">0,2312</div>
<div class="t" style="left:454.15px;top:636.90px;font-size:14.90px;line-height:16px;color:#f2f0ea;transform:scaleX(1.1900);">401,6030</div>
<div class="t" style="left:536.27px;top:636.90px;font-size:14.90px;line-height:16px;color:#f2f0ea;transform:scaleX(1.1900);">321,9798</div>
<div class="t" style="left:618.71px;top:636.90px;font-size:14.90px;line-height:16px;color:#f2f0ea;transform:scaleX(1.1900);">260,5032</div>
<div class="t" style="left:701.11px;top:636.90px;font-size:14.90px;line-height:16px;color:#f2f0ea;transform:scaleX(1.1900);">201,6106</div>
<div class="t" style="left:783.16px;top:636.90px;font-size:14.90px;line-height:16px;color:#f2f0ea;transform:scaleX(1.1900);">140,8277</div>
<div class="t" style="left:866.67px;top:636.90px;font-size:14.90px;line-height:16px;color:#f2f0ea;transform:scaleX(1.1900);">0,3951</div>
<div class="t" style="left:939.07px;top:636.90px;font-size:14.90px;line-height:16px;color:#f2f0ea;transform:scaleX(1.1900);">38,9012</div>
<div class="t" style="left:1016.96px;top:636.90px;font-size:14.90px;line-height:16px;color:#f2f0ea;transform:scaleX(1.1900);">140,5035</div>
<div class="t" style="left:1100.59px;top:636.90px;font-size:14.90px;line-height:16px;color:#f2f0ea;transform:scaleX(1.1900);">81,0266</div>
<div class="t" style="left:1173.35px;top:636.90px;font-size:14.90px;line-height:16px;color:#f2f0ea;transform:scaleX(1.1900);">49,1776</div>
<div class="t" style="left:1245.26px;top:636.90px;font-size:14.90px;line-height:16px;color:#f2f0ea;transform:scaleX(1.1900);">103,1394</div>
<div class="t" style="left:1342.66px;top:636.90px;font-size:14.90px;line-height:16px;color:#f2f0ea;transform:scaleX(1.1900);">167,7547</div>
<div class="t" style="left:1447.16px;top:636.90px;font-size:14.90px;line-height:16px;color:#f2f0ea;transform:scaleX(1.1900);">109,5693</div>
<div class="t" style="left:1529.79px;top:636.90px;font-size:14.90px;line-height:16px;color:#f2f0ea;transform:scaleX(1.1900);">55,8123</div>
<div class="t" style="left:453.97px;top:658.70px;font-size:14.90px;line-height:16px;color:#f2f0ea;transform:scaleX(1.1900);">0,3127</div>
<div class="t" style="left:536.27px;top:658.70px;font-size:14.90px;line-height:16px;color:#f2f0ea;transform:scaleX(1.1900);">0,3127</div>
<div class="t" style="left:619.07px;top:658.70px;font-size:14.90px;line-height:16px;color:#f2f0ea;transform:scaleX(1.1900);">0,3127</div>
<div class="t" style="left:701.47px;top:658.70px;font-size:14.90px;line-height:16px;color:#f2f0ea;transform:scaleX(1.1900);">0,3127</div>
<div class="t" style="left:783.87px;top:658.70px;font-size:14.90px;line-height:16px;color:#f2f0ea;transform:scaleX(1.1900);">0,3127</div>
<div class="t" style="left:866.67px;top:658.70px;font-size:14.90px;line-height:16px;color:#f2f0ea;transform:scaleX(1.1900);">0,3127</div>
<div class="t" style="left:939.07px;top:658.70px;font-size:14.90px;line-height:16px;color:#f2f0ea;transform:scaleX(1.1900);">0,4003</div>
<div class="t" style="left:1017.67px;top:658.70px;font-size:14.90px;line-height:16px;color:#f2f0ea;transform:scaleX(1.1900);">0,3795</div>
<div class="t" style="left:1100.77px;top:658.70px;font-size:14.90px;line-height:16px;color:#f2f0ea;transform:scaleX(1.1900);">0,2496</div>
<div class="t" style="left:1173.17px;top:658.70px;font-size:14.90px;line-height:16px;color:#f2f0ea;transform:scaleX(1.1900);">0,3395</div>
<div class="t" style="left:1245.97px;top:658.70px;font-size:14.90px;line-height:16px;color:#f2f0ea;transform:scaleX(1.1900);">0,2681</div>
<div class="t" style="left:1343.37px;top:658.70px;font-size:14.90px;line-height:16px;color:#f2f0ea;transform:scaleX(1.1900);">0,2626</div>
<div class="t" style="left:1447.87px;top:658.70px;font-size:14.90px;line-height:16px;color:#f2f0ea;transform:scaleX(1.1900);">0,5122</div>
<div class="t" style="left:1529.97px;top:658.70px;font-size:14.90px;line-height:16px;color:#f2f0ea;transform:scaleX(1.1900);">0,2151</div>
<div class="t" style="left:453.97px;top:680.50px;font-size:14.90px;line-height:16px;color:#f2f0ea;transform:scaleX(1.1900);">0,3290</div>
<div class="t" style="left:536.27px;top:680.50px;font-size:14.90px;line-height:16px;color:#f2f0ea;transform:scaleX(1.1900);">0,3290</div>
<div class="t" style="left:619.07px;top:680.50px;font-size:14.90px;line-height:16px;color:#f2f0ea;transform:scaleX(1.1900);">0,3290</div>
<div class="t" style="left:701.47px;top:680.50px;font-size:14.90px;line-height:16px;color:#f2f0ea;transform:scaleX(1.1900);">0,3290</div>
<div class="t" style="left:783.87px;top:680.50px;font-size:14.90px;line-height:16px;color:#f2f0ea;transform:scaleX(1.1900);">0,3290</div>
<div class="t" style="left:866.67px;top:680.50px;font-size:14.90px;line-height:16px;color:#f2f0ea;transform:scaleX(1.1900);">0,3290</div>
<div class="t" style="left:939.07px;top:680.50px;font-size:14.90px;line-height:16px;color:#f2f0ea;transform:scaleX(1.1900);">0,3642</div>
<div class="t" style="left:1017.67px;top:680.50px;font-size:14.90px;line-height:16px;color:#f2f0ea;transform:scaleX(1.1900);">0,3562</div>
<div class="t" style="left:1100.77px;top:680.50px;font-size:14.90px;line-height:16px;color:#f2f0ea;transform:scaleX(1.1900);">0,2656</div>
<div class="t" style="left:1173.17px;top:680.50px;font-size:14.90px;line-height:16px;color:#f2f0ea;transform:scaleX(1.1900);">0,4271</div>
<div class="t" style="left:1245.97px;top:680.50px;font-size:14.90px;line-height:16px;color:#f2f0ea;transform:scaleX(1.1900);">0,2525</div>
<div class="t" style="left:1343.37px;top:680.50px;font-size:14.90px;line-height:16px;color:#f2f0ea;transform:scaleX(1.1900);">0,3616</div>
<div class="t" style="left:1447.87px;top:680.50px;font-size:14.90px;line-height:16px;color:#f2f0ea;transform:scaleX(1.1900);">0,4063</div>
<div class="t" style="left:1529.97px;top:680.50px;font-size:14.90px;line-height:16px;color:#f2f0ea;transform:scaleX(1.1900);">0,1971</div>
<div class="t" style="left:454.15px;top:702.30px;font-size:14.90px;line-height:16px;color:#f2f0ea;transform:scaleX(1.1900);">401,6030</div>
<div class="t" style="left:536.27px;top:702.30px;font-size:14.90px;line-height:16px;color:#f2f0ea;transform:scaleX(1.1900);">317,7876</div>
<div class="t" style="left:618.71px;top:702.30px;font-size:14.90px;line-height:16px;color:#f2f0ea;transform:scaleX(1.1900);">256,0608</div>
<div class="t" style="left:700.76px;top:702.30px;font-size:14.90px;line-height:16px;color:#f2f0ea;transform:scaleX(1.1900);">197,1954</div>
<div class="t" style="left:783.16px;top:702.30px;font-size:14.90px;line-height:16px;color:#f2f0ea;transform:scaleX(1.1900);">137,3138</div>
<div class="t" style="left:866.67px;top:702.30px;font-size:14.90px;line-height:16px;color:#f2f0ea;transform:scaleX(1.1900);">0,0000</div>
<div class="t" style="left:939.25px;top:702.30px;font-size:14.90px;line-height:16px;color:#f2f0ea;transform:scaleX(1.1900);">40,4547</div>
<div class="t" style="left:1016.96px;top:702.30px;font-size:14.90px;line-height:16px;color:#f2f0ea;transform:scaleX(1.1900);">140,1400</div>
<div class="t" style="left:1100.41px;top:702.30px;font-size:14.90px;line-height:16px;color:#f2f0ea;transform:scaleX(1.1900);">75,0933</div>
<div class="t" style="left:1172.99px;top:702.30px;font-size:14.90px;line-height:16px;color:#f2f0ea;transform:scaleX(1.1900);">52,3387</div>
<div class="t" style="left:1245.79px;top:702.30px;font-size:14.90px;line-height:16px;color:#f2f0ea;transform:scaleX(1.1900);">93,6477</div>
<div class="t" style="left:1342.66px;top:702.30px;font-size:14.90px;line-height:16px;color:#f2f0ea;transform:scaleX(1.1900);">168,1633</div>
<div class="t" style="left:1447.16px;top:702.30px;font-size:14.90px;line-height:16px;color:#f2f0ea;transform:scaleX(1.1900);">113,8457</div>
<div class="t" style="left:1530.15px;top:702.30px;font-size:14.90px;line-height:16px;color:#f2f0ea;transform:scaleX(1.1900);">47,2365</div>
<div class="t" style="left:453.61px;top:724.10px;font-size:14.90px;line-height:16px;color:#f2f0ea;transform:scaleX(1.1900);">6,4925</div>
<div class="t" style="left:535.91px;top:724.10px;font-size:14.90px;line-height:16px;color:#f2f0ea;transform:scaleX(1.1900);">7,8654</div>
<div class="t" style="left:618.71px;top:724.10px;font-size:14.90px;line-height:16px;color:#f2f0ea;transform:scaleX(1.1900);">7,6582</div>
<div class="t" style="left:701.11px;top:724.10px;font-size:14.90px;line-height:16px;color:#f2f0ea;transform:scaleX(1.1900);">7,2145</div>
<div class="t" style="left:783.51px;top:724.10px;font-size:14.90px;line-height:16px;color:#f2f0ea;transform:scaleX(1.1900);">6,5739</div>
<div class="t" style="left:866.67px;top:724.10px;font-size:14.90px;line-height:16px;color:#f2f0ea;transform:scaleX(1.1900);">0,8118</div>
<div class="t" style="left:939.25px;top:724.10px;font-size:14.90px;line-height:16px;color:#f2f0ea;transform:scaleX(1.1900);">4,2406</div>
<div class="t" style="left:1017.31px;top:724.10px;font-size:14.90px;line-height:16px;color:#f2f0ea;transform:scaleX(1.1900);">6,3178</div>
<div class="t" style="left:1100.41px;top:724.10px;font-size:14.90px;line-height:16px;color:#f2f0ea;transform:scaleX(1.1900);">6,8545</div>
<div class="t" style="left:1173.17px;top:724.10px;font-size:14.90px;line-height:16px;color:#f2f0ea;transform:scaleX(1.1900);">3,3860</div>
<div class="t" style="left:1245.61px;top:724.10px;font-size:14.90px;line-height:16px;color:#f2f0ea;transform:scaleX(1.1900);">7,4670</div>
<div class="t" style="left:1343.19px;top:724.10px;font-size:14.90px;line-height:16px;color:#f2f0ea;transform:scaleX(1.1900);">5,7239</div>
<div class="t" style="left:1448.05px;top:724.10px;font-size:14.90px;line-height:16px;color:#f2f0ea;transform:scaleX(1.1900);">4,1206</div>
<div class="t" style="left:1529.79px;top:724.10px;font-size:14.90px;line-height:16px;color:#f2f0ea;transform:scaleX(1.1900);">5,5901</div>
<div class="t" style="left:453.79px;top:745.75px;font-size:14.90px;line-height:16px;color:#f2f0ea;transform:scaleX(1.1900);">5,0504</div>
<div class="t" style="left:535.91px;top:745.75px;font-size:14.90px;line-height:16px;color:#f2f0ea;transform:scaleX(1.1900);">7,3045</div>
<div class="t" style="left:618.71px;top:745.75px;font-size:14.90px;line-height:16px;color:#f2f0ea;transform:scaleX(1.1900);">7,5954</div>
<div class="t" style="left:701.11px;top:745.75px;font-size:14.90px;line-height:16px;color:#f2f0ea;transform:scaleX(1.1900);">7,6617</div>
<div class="t" style="left:783.51px;top:745.75px;font-size:14.90px;line-height:16px;color:#f2f0ea;transform:scaleX(1.1900);">7,5949</div>
<div class="t" style="left:866.31px;top:745.75px;font-size:14.90px;line-height:16px;color:#f2f0ea;transform:scaleX(1.1900);">78,2429</div>
<div class="t" style="left:938.89px;top:745.75px;font-size:14.90px;line-height:16px;color:#f2f0ea;transform:scaleX(1.1900);">8,0857</div>
<div class="t" style="left:1017.49px;top:745.75px;font-size:14.90px;line-height:16px;color:#f2f0ea;transform:scaleX(1.1900);">8,3399</div>
<div class="t" style="left:1100.06px;top:745.75px;font-size:14.90px;line-height:16px;color:#f2f0ea;transform:scaleX(1.1900);">12,1301</div>
<div class="t" style="left:1172.99px;top:745.75px;font-size:14.90px;line-height:16px;color:#f2f0ea;transform:scaleX(1.1900);">9,7291</div>
<div class="t" style="left:1245.26px;top:745.75px;font-size:14.90px;line-height:16px;color:#f2f0ea;transform:scaleX(1.1900);">13,7977</div>
<div class="t" style="left:1342.66px;top:745.75px;font-size:14.90px;line-height:16px;color:#f2f0ea;transform:scaleX(1.1900);">14,8995</div>
<div class="t" style="left:1447.16px;top:745.75px;font-size:14.90px;line-height:16px;color:#f2f0ea;transform:scaleX(1.1900);">17,2109</div>
<div class="t" style="left:1529.26px;top:745.75px;font-size:14.90px;line-height:16px;color:#f2f0ea;transform:scaleX(1.1900);">18,2311</div>
</div>
<div class="a" style="left:0;top:850.5px;width:1238px;height:9.5px;background:#5c5c5c;"></div>
<div class="a" style="left:607px;top:851px;width:615px;height:9px;background:#535353;border-radius:4px;"></div>
<div class="a" style="left:1227px;top:851px;width:11px;height:9px;background:#6c6c6c;"></div>
<svg style="left:0;top:0" width="1" height="1"><polygon points="1230,852 1230,859 1235,855.5" fill="#3a3a3a"/><polygon points="8,852 8,859 3,855.5" fill="#3a3a3a"/></svg>
<div class="a" style="left:-7.8px;top:802px;width:49.7px;height:48.5px;background:linear-gradient(#aaaaaa,#8f8f8f 45%,#6e6e6e);border-radius:4px 4px 0 0;"></div>
<div class="a" style="left:-9.6px;top:802px;width:1.6px;height:48.5px;background:#262626;"></div>
<div class="a" style="left:-2.8px;top:807px;width:39.7px;height:24.2px;background:#0a88aa;border-radius:3.5px;box-shadow:inset 0 0 2px rgba(0,0,0,0.35);"></div>
<div class="t" style="left:5.33px;top:835.30px;font-size:12.20px;line-height:14px;color:#1e1e1e;transform:scaleX(0.8600);-webkit-text-stroke:0.2px;">Cyan</div>
<div class="a" style="left:44.2px;top:802px;width:49.7px;height:48.5px;background:linear-gradient(#aaaaaa,#8f8f8f 45%,#6e6e6e);border-radius:4px 4px 0 0;"></div>
<div class="a" style="left:42.4px;top:802px;width:1.6px;height:48.5px;background:#262626;"></div>
<div class="a" style="left:49.2px;top:807px;width:39.7px;height:24.2px;background:#ff0000;border-radius:3.5px;box-shadow:inset 0 0 2px rgba(0,0,0,0.35);"></div>
<div class="t" style="left:45.00px;top:835.30px;font-size:12.20px;line-height:14px;color:#1e1e1e;transform:scaleX(0.8600);-webkit-text-stroke:0.2px;">100% Red</div>
<div class="a" style="left:96.2px;top:802px;width:49.7px;height:48.5px;background:linear-gradient(#aaaaaa,#8f8f8f 45%,#6e6e6e);border-radius:4px 4px 0 0;"></div>
<div class="a" style="left:94.4px;top:802px;width:1.6px;height:48.5px;background:#262626;"></div>
<div class="a" style="left:101.2px;top:807px;width:39.7px;height:12.3px;background:#00ff00;border-radius:3.5px;box-shadow:inset 0 0 2px rgba(0,0,0,0.35);"></div>
<div class="t" style="left:107.09px;top:823.80px;font-size:12.20px;line-height:14px;color:#1e1e1e;transform:scaleX(0.8800);-webkit-text-stroke:0.2px;">100%</div>
<div class="t" style="left:106.18px;top:835.30px;font-size:12.20px;line-height:14px;color:#1e1e1e;transform:scaleX(0.8800);-webkit-text-stroke:0.2px;">Green</div>
<div class="a" style="left:148.2px;top:802px;width:49.7px;height:48.5px;background:linear-gradient(#aaaaaa,#8f8f8f 45%,#6e6e6e);border-radius:4px 4px 0 0;"></div>
<div class="a" style="left:146.4px;top:802px;width:1.6px;height:48.5px;background:#262626;"></div>
<div class="a" style="left:153.2px;top:807px;width:39.7px;height:12.3px;background:#0000f0;border-radius:3.5px;box-shadow:inset 0 0 2px rgba(0,0,0,0.35);"></div>
<div class="t" style="left:159.09px;top:823.80px;font-size:12.20px;line-height:14px;color:#1e1e1e;transform:scaleX(0.8800);-webkit-text-stroke:0.2px;">100%</div>
<div class="t" style="left:162.05px;top:835.30px;font-size:12.20px;line-height:14px;color:#1e1e1e;transform:scaleX(0.8800);-webkit-text-stroke:0.2px;">Blue</div>
<div class="a" style="left:200.2px;top:802px;width:49.7px;height:48.5px;background:linear-gradient(#aaaaaa,#8f8f8f 45%,#6e6e6e);border-radius:4px 4px 0 0;"></div>
<div class="a" style="left:198.4px;top:802px;width:1.6px;height:48.5px;background:#262626;"></div>
<div class="a" style="left:205.2px;top:807px;width:39.7px;height:12.3px;background:#00ffff;border-radius:3.5px;box-shadow:inset 0 0 2px rgba(0,0,0,0.35);"></div>
<div class="t" style="left:211.09px;top:823.80px;font-size:12.20px;line-height:14px;color:#1e1e1e;transform:scaleX(0.8800);-webkit-text-stroke:0.2px;">100%</div>
<div class="t" style="left:212.54px;top:835.30px;font-size:12.20px;line-height:14px;color:#1e1e1e;transform:scaleX(0.8800);-webkit-text-stroke:0.2px;">Cyan</div>
<div class="a" style="left:252.2px;top:802px;width:49.7px;height:48.5px;background:linear-gradient(#aaaaaa,#8f8f8f 45%,#6e6e6e);border-radius:4px 4px 0 0;"></div>
<div class="a" style="left:250.4px;top:802px;width:1.6px;height:48.5px;background:#262626;"></div>
<div class="a" style="left:257.2px;top:807px;width:39.7px;height:12.3px;background:#ff00ff;border-radius:3.5px;box-shadow:inset 0 0 2px rgba(0,0,0,0.35);"></div>
<div class="t" style="left:263.09px;top:823.80px;font-size:12.20px;line-height:14px;color:#1e1e1e;transform:scaleX(0.8800);-webkit-text-stroke:0.2px;">100%</div>
<div class="t" style="left:255.69px;top:835.30px;font-size:12.20px;line-height:14px;color:#1e1e1e;transform:scaleX(0.8800);-webkit-text-stroke:0.2px;">Magenta</div>
<div class="a" style="left:304.2px;top:802px;width:49.7px;height:48.5px;background:linear-gradient(#aaaaaa,#8f8f8f 45%,#6e6e6e);border-radius:4px 4px 0 0;"></div>
<div class="a" style="left:302.4px;top:802px;width:1.6px;height:48.5px;background:#262626;"></div>
<div class="a" style="left:309.2px;top:807px;width:39.7px;height:12.3px;background:#ffff00;border-radius:3.5px;box-shadow:inset 0 0 2px rgba(0,0,0,0.35);"></div>
<div class="t" style="left:315.09px;top:823.80px;font-size:12.20px;line-height:14px;color:#1e1e1e;transform:scaleX(0.8800);-webkit-text-stroke:0.2px;">100%</div>
<div class="t" style="left:313.59px;top:835.30px;font-size:12.20px;line-height:14px;color:#1e1e1e;transform:scaleX(0.8800);-webkit-text-stroke:0.2px;">Yellow</div>
<div class="a" style="left:356.2px;top:802px;width:49.7px;height:48.5px;background:linear-gradient(#aaaaaa,#8f8f8f 45%,#6e6e6e);border-radius:4px 4px 0 0;"></div>
<div class="a" style="left:354.4px;top:802px;width:1.6px;height:48.5px;background:#262626;"></div>
<div class="a" style="left:361.2px;top:807px;width:39.7px;height:24.2px;background:#733f22;border-radius:3.5px;box-shadow:inset 0 0 2px rgba(0,0,0,0.35);"></div>
<div class="t" style="left:374.80px;top:835.90px;font-size:11.20px;line-height:12px;color:#1e1e1e;transform:scaleX(0.9000);-webkit-text-stroke:0.35px;">2E</div>
<div class="a" style="left:408.2px;top:802px;width:49.7px;height:48.5px;background:linear-gradient(#aaaaaa,#8f8f8f 45%,#6e6e6e);border-radius:4px 4px 0 0;"></div>
<div class="a" style="left:406.4px;top:802px;width:1.6px;height:48.5px;background:#262626;"></div>
<div class="a" style="left:413.2px;top:807px;width:39.7px;height:24.2px;background:#cf8a68;border-radius:3.5px;box-shadow:inset 0 0 2px rgba(0,0,0,0.35);"></div>
<div class="t" style="left:427.05px;top:835.90px;font-size:11.20px;line-height:12px;color:#1e1e1e;transform:scaleX(0.9000);-webkit-text-stroke:0.35px;">2F</div>
<div class="a" style="left:460.2px;top:802px;width:49.7px;height:48.5px;background:linear-gradient(#aaaaaa,#8f8f8f 45%,#6e6e6e);border-radius:4px 4px 0 0;"></div>
<div class="a" style="left:458.4px;top:802px;width:1.6px;height:48.5px;background:#262626;"></div>
<div class="a" style="left:465.2px;top:807px;width:39.7px;height:24.2px;background:#ffc89a;border-radius:3.5px;box-shadow:inset 0 0 2px rgba(0,0,0,0.35);"></div>
<div class="t" style="left:478.65px;top:835.90px;font-size:11.20px;line-height:12px;color:#1e1e1e;transform:scaleX(0.9000);-webkit-text-stroke:0.35px;">2K</div>
<div class="a" style="left:512.2px;top:802px;width:49.7px;height:48.5px;background:linear-gradient(#aaaaaa,#8f8f8f 45%,#6e6e6e);border-radius:4px 4px 0 0;"></div>
<div class="a" style="left:510.4px;top:802px;width:1.6px;height:48.5px;background:#262626;"></div>
<div class="a" style="left:517.2px;top:807px;width:39.7px;height:24.2px;background:#ffcfae;border-radius:3.5px;box-shadow:inset 0 0 2px rgba(0,0,0,0.35);"></div>
<div class="t" style="left:530.60px;top:835.90px;font-size:11.20px;line-height:12px;color:#1e1e1e;transform:scaleX(0.9000);-webkit-text-stroke:0.35px;">5D</div>
<div class="a" style="left:564.2px;top:802px;width:49.7px;height:48.5px;background:linear-gradient(#aaaaaa,#8f8f8f 45%,#6e6e6e);border-radius:4px 4px 0 0;"></div>
<div class="a" style="left:562.4px;top:802px;width:1.6px;height:48.5px;background:#262626;"></div>
<div class="a" style="left:569.2px;top:807px;width:39.7px;height:24.2px;background:#f5a574;border-radius:3.5px;box-shadow:inset 0 0 2px rgba(0,0,0,0.35);"></div>
<div class="t" style="left:582.80px;top:835.90px;font-size:11.20px;line-height:12px;color:#1e1e1e;transform:scaleX(0.9000);-webkit-text-stroke:0.35px;">7E</div>
<div class="a" style="left:616.2px;top:802px;width:49.7px;height:48.5px;background:linear-gradient(#aaaaaa,#8f8f8f 45%,#6e6e6e);border-radius:4px 4px 0 0;"></div>
<div class="a" style="left:614.4px;top:802px;width:1.6px;height:48.5px;background:#262626;"></div>
<div class="a" style="left:621.2px;top:807px;width:39.7px;height:24.2px;background:#cb8c58;border-radius:3.5px;box-shadow:inset 0 0 2px rgba(0,0,0,0.35);"></div>
<div class="t" style="left:635.05px;top:835.90px;font-size:11.20px;line-height:12px;color:#1e1e1e;transform:scaleX(0.9000);-webkit-text-stroke:0.35px;">7F</div>
<div class="a" style="left:668.2px;top:802px;width:49.7px;height:48.5px;background:linear-gradient(#aaaaaa,#8f8f8f 45%,#6e6e6e);border-radius:4px 4px 0 0;"></div>
<div class="a" style="left:666.4px;top:802px;width:1.6px;height:48.5px;background:#262626;"></div>
<div class="a" style="left:673.2px;top:807px;width:39.7px;height:24.2px;background:#8c5428;border-radius:3.5px;box-shadow:inset 0 0 2px rgba(0,0,0,0.35);"></div>
<div class="t" style="left:686.40px;top:835.90px;font-size:11.20px;line-height:12px;color:#1e1e1e;transform:scaleX(0.9000);-webkit-text-stroke:0.35px;">7G</div>
<div class="a" style="left:720.2px;top:802px;width:49.7px;height:48.5px;background:linear-gradient(#aaaaaa,#8f8f8f 45%,#6e6e6e);border-radius:4px 4px 0 0;"></div>
<div class="a" style="left:718.4px;top:802px;width:1.6px;height:48.5px;background:#262626;"></div>
<div class="a" style="left:725.2px;top:807px;width:39.7px;height:24.2px;background:#d39a70;border-radius:3.5px;box-shadow:inset 0 0 2px rgba(0,0,0,0.35);"></div>
<div class="t" style="left:738.70px;top:835.90px;font-size:11.20px;line-height:12px;color:#1e1e1e;transform:scaleX(0.9000);-webkit-text-stroke:0.35px;">7H</div>
<div class="a" style="left:772.2px;top:802px;width:49.7px;height:48.5px;background:linear-gradient(#aaaaaa,#8f8f8f 45%,#6e6e6e);border-radius:4px 4px 0 0;"></div>
<div class="a" style="left:770.4px;top:802px;width:1.6px;height:48.5px;background:#262626;"></div>
<div class="a" style="left:777.2px;top:807px;width:39.7px;height:24.2px;background:#9e5220;border-radius:3.5px;box-shadow:inset 0 0 2px rgba(0,0,0,0.35);"></div>
<div class="t" style="left:793.02px;top:835.90px;font-size:11.20px;line-height:12px;color:#1e1e1e;transform:scaleX(0.9000);-webkit-text-stroke:0.35px;">7I</div>
<div class="a" style="left:824.2px;top:802px;width:49.7px;height:48.5px;background:linear-gradient(#aaaaaa,#8f8f8f 45%,#6e6e6e);border-radius:4px 4px 0 0;"></div>
<div class="a" style="left:822.4px;top:802px;width:1.6px;height:48.5px;background:#262626;"></div>
<div class="a" style="left:829.2px;top:807px;width:39.7px;height:24.2px;background:#de8c5a;border-radius:3.5px;box-shadow:inset 0 0 2px rgba(0,0,0,0.35);"></div>
<div class="t" style="left:843.81px;top:835.90px;font-size:11.20px;line-height:12px;color:#1e1e1e;transform:scaleX(0.9000);-webkit-text-stroke:0.35px;">7J</div>
<div class="a" style="left:876.2px;top:802px;width:49.7px;height:48.5px;background:linear-gradient(#aaaaaa,#8f8f8f 45%,#6e6e6e);border-radius:4px 4px 0 0;"></div>
<div class="a" style="left:874.4px;top:802px;width:1.6px;height:48.5px;background:#262626;"></div>
<div class="a" style="left:881.2px;top:807px;width:39.7px;height:24.2px;background:#d58c68;border-radius:3.5px;box-shadow:inset 0 0 2px rgba(0,0,0,0.35);"></div>
<div class="t" style="left:894.60px;top:835.90px;font-size:11.20px;line-height:12px;color:#1e1e1e;transform:scaleX(0.9000);-webkit-text-stroke:0.35px;">8D</div>
<div class="a" style="left:928.2px;top:802px;width:49.7px;height:48.5px;background:linear-gradient(#aaaaaa,#8f8f8f 45%,#6e6e6e);border-radius:4px 4px 0 0;"></div>
<div class="a" style="left:926.4px;top:802px;width:1.6px;height:48.5px;background:#262626;"></div>
<div class="a" style="left:933.2px;top:807px;width:39.7px;height:24.2px;background:#ff9c78;border-radius:3.5px;box-shadow:inset 0 0 2px rgba(0,0,0,0.35);"></div>
<div class="t" style="left:946.85px;top:835.90px;font-size:11.20px;line-height:12px;color:#1e1e1e;transform:scaleX(0.9000);-webkit-text-stroke:0.35px;">8E</div>
<div class="a" style="left:980.2px;top:802px;width:49.7px;height:48.5px;background:linear-gradient(#aaaaaa,#8f8f8f 45%,#6e6e6e);border-radius:4px 4px 0 0;"></div>
<div class="a" style="left:978.4px;top:802px;width:1.6px;height:48.5px;background:#262626;"></div>
<div class="a" style="left:985.2px;top:807px;width:39.7px;height:24.2px;background:#d49a74;border-radius:3.5px;box-shadow:inset 0 0 2px rgba(0,0,0,0.35);"></div>
<div class="t" style="left:999.10px;top:835.90px;font-size:11.20px;line-height:12px;color:#1e1e1e;transform:scaleX(0.9000);-webkit-text-stroke:0.35px;">8F</div>
<div class="a" style="left:1032.2px;top:802px;width:49.7px;height:48.5px;background:linear-gradient(#aaaaaa,#8f8f8f 45%,#6e6e6e);border-radius:4px 4px 0 0;"></div>
<div class="a" style="left:1030.4px;top:802px;width:1.6px;height:48.5px;background:#262626;"></div>
<div class="a" style="left:1037.2px;top:807px;width:39.7px;height:24.2px;background:#d29270;border-radius:3.5px;box-shadow:inset 0 0 2px rgba(0,0,0,0.35);"></div>
<div class="t" style="left:1050.45px;top:835.90px;font-size:11.20px;line-height:12px;color:#1e1e1e;transform:scaleX(0.9000);-webkit-text-stroke:0.35px;">8G</div>
<div class="a" style="left:1084.2px;top:802px;width:49.7px;height:48.5px;background:linear-gradient(#aaaaaa,#8f8f8f 45%,#6e6e6e);border-radius:4px 4px 0 0;"></div>
<div class="a" style="left:1082.4px;top:802px;width:1.6px;height:48.5px;background:#262626;"></div>
<div class="a" style="left:1089.2px;top:807px;width:39.7px;height:24.2px;background:#d8a070;border-radius:3.5px;box-shadow:inset 0 0 2px rgba(0,0,0,0.35);"></div>
<div class="t" style="left:1102.75px;top:835.90px;font-size:11.20px;line-height:12px;color:#1e1e1e;transform:scaleX(0.9000);-webkit-text-stroke:0.35px;">8H</div>
<div class="a" style="left:1136.2px;top:802px;width:49.7px;height:48.5px;background:linear-gradient(#aaaaaa,#8f8f8f 45%,#6e6e6e);border-radius:4px 4px 0 0;"></div>
<div class="a" style="left:1134.4px;top:802px;width:1.6px;height:48.5px;background:#262626;"></div>
<div class="a" style="left:1141.2px;top:807px;width:39.7px;height:24.2px;background:#7c4a22;border-radius:3.5px;box-shadow:inset 0 0 2px rgba(0,0,0,0.35);"></div>
<div class="t" style="left:1157.07px;top:835.90px;font-size:11.20px;line-height:12px;color:#1e1e1e;transform:scaleX(0.9000);-webkit-text-stroke:0.35px;">8I</div>
<div class="a" style="left:1188.0px;top:802px;width:50.4px;height:48.5px;background:#2b2b2b;border-radius:4px 4px 0 0;"></div>
<div class="a" style="left:1193.2px;top:807px;width:39.7px;height:24.2px;background:#e08a58;border-radius:3.5px;box-shadow:inset 0 0 2px rgba(0,0,0,0.35);"></div>
<div class="t" style="left:1207.70px;top:836.10px;font-size:10.76px;line-height:12px;color:#ffffff;font-weight:bold;transform:scaleX(0.9388);">8J</div>
<div class="a" style="left:1239.1px;top:802px;width:48.2px;height:18px;background:linear-gradient(#acacac,#7a7a7a);border-radius:4px 4px 0 0;"></div>
<div class="a" style="left:1239.1px;top:820.7px;width:48.2px;height:39.3px;background:linear-gradient(#a4a4a4,#7a7a7a);"></div>
<div class="a" style="left:1237.8px;top:802px;width:1.4px;height:58px;background:#262626;"></div>
<div class="a" style="left:1239px;top:819.8px;width:48.3px;height:1.2px;background:#2e2e2e;"></div>
<div class="a" style="left:1256.5px;top:803.4px;width:14px;height:14px;border-radius:50%;background:linear-gradient(#7c7c7c,#a8a8a8);"></div>
<svg style="left:0;top:0" width="1" height="1"><polygon points="1259.3,813.2 1267.7,813.2 1263.5,808.2" fill="#2a2a2a"/></svg>
<div class="a" style="left:1247.4px;top:826.5px;width:30.9px;height:30.2px;box-sizing:border-box;border:3px solid #1e1e1e;border-radius:5px;background:linear-gradient(#b4b4b4,#a4a4a4 50%,#8c8c8c 50%,#7e7e7e);"></div>
<div class="a" style="left:1256px;top:835px;width:13.5px;height:13.3px;background:linear-gradient(#1c1c1c 50%,#000 50%);"></div>
<div class="a" style="left:1287.3px;top:802px;width:270px;height:58px;background:#2a2a2a;"></div>
<div class="a" style="left:1288.0px;top:802px;width:46.0px;height:29.6px;background:linear-gradient(#adadad,#8c8c8c 50%,#6f6f6f);border-radius:4px 0 0 0;"></div>
<div class="a" style="left:1335.2px;top:802px;width:43.8px;height:29.6px;background:linear-gradient(#adadad,#8c8c8c 50%,#6f6f6f);border-radius:0;"></div>
<div class="a" style="left:1380.2px;top:802px;width:43.8px;height:29.6px;background:linear-gradient(#adadad,#8c8c8c 50%,#6f6f6f);border-radius:0;"></div>
<div class="a" style="left:1425.2px;top:802px;width:43.8px;height:29.6px;background:linear-gradient(#adadad,#8c8c8c 50%,#6f6f6f);border-radius:0;"></div>
<div class="a" style="left:1470.2px;top:802px;width:43.8px;height:29.6px;background:linear-gradient(#3a3a3a,#262626);border-radius:0;"></div>
<div class="a" style="left:1515.3px;top:802px;width:44.7px;height:29.6px;background:linear-gradient(#adadad,#8c8c8c 50%,#6f6f6f);border-radius:0;"></div>
<div class="a" style="left:1300.6px;top:807.0px;width:20.4px;height:20.4px;border-radius:50%;background:linear-gradient(#787878,#b4b4b4);"></div>
<div class="a" style="left:1346.8px;top:807.0px;width:20.4px;height:20.4px;border-radius:50%;background:linear-gradient(#787878,#b4b4b4);"></div>
<div class="a" style="left:1391.6px;top:807.0px;width:20.4px;height:20.4px;border-radius:50%;background:linear-gradient(#787878,#b4b4b4);"></div>
<div class="a" style="left:1436.7px;top:807.0px;width:20.4px;height:20.4px;border-radius:50%;background:linear-gradient(#787878,#b4b4b4);"></div>
<div class="a" style="left:1481.5px;top:807.0px;width:20.4px;height:20.4px;border-radius:50%;background:linear-gradient(#282828,#363636);"></div>
<div class="a" style="left:1527.6px;top:807.0px;width:20.4px;height:20.4px;border-radius:50%;background:linear-gradient(#787878,#b4b4b4);"></div>
<svg style="left:0;top:0" width="1" height="1"><rect x="1307" y="813" width="7.8" height="7.8" fill="#222"/><polygon points="1353.6,811.8 1353.6,822.2 1362,817" fill="#222"/><path d="M1399.4,812.6 h-2.2 v9.6 h2.2" fill="none" stroke="#202020" stroke-width="1.5"/><rect x="1396.2" y="812" width="2.5" height="10.8" fill="#202020"/><path d="M1405.2,812.6 h2.2 v9.6 h-2.2" fill="none" stroke="#202020" stroke-width="1.5"/><rect x="1405.6" y="812" width="2.5" height="10.8" fill="#202020"/><rect x="1399.6" y="816" width="1.5" height="1.6" fill="#202020"/><rect x="1402.4" y="816" width="1.5" height="1.6" fill="#202020"/><path d="M1447,816.7 C1444.2,813.4 1440.9,813.8 1440.9,816.7 C1440.9,819.6 1444.2,820 1447,816.7 C1449.8,813.4 1453.1,813.8 1453.1,816.7 C1453.1,819.6 1449.8,820 1447,816.7 Z" fill="none" stroke="#222" stroke-width="1.6"/><path d="M1487.6,815.6 A4.8,4.8 0 0 1 1495.6,813.6 M1496.6,818.2 A4.8,4.8 0 0 1 1488.6,820.2" fill="none" stroke="#141414" stroke-width="2.4"/><polygon points="1494,810.8 1498.6,814.2 1494,816.4" fill="#141414"/><polygon points="1490.2,823 1485.6,819.6 1490.2,817.4" fill="#141414"/></svg>
<div class="a" style="left:1287.9px;top:833.2px;width:136.2px;height:26.8px;background:linear-gradient(#b4b4b4,#8e8e8e 50%,#737373);border-radius:5px 0 0 0;"></div>
<div class="a" style="left:1425.2px;top:833.2px;width:132px;height:26.8px;background:linear-gradient(#b4b4b4,#8e8e8e 50%,#737373);"></div>
<div class="a" style="left:1309.0px;top:837.8px;width:20px;height:20px;border-radius:50%;background:linear-gradient(#7a7a7a,#b0b0b0);"></div>
<div class="a" style="left:1521.5px;top:837.8px;width:20px;height:20px;border-radius:50%;background:linear-gradient(#7a7a7a,#b0b0b0);"></div>
<svg style="left:0;top:0" width="1" height="1"><path d="M1319.8,843.3 L1315.6,847.8 L1319.8,852.3 M1324.2,843.3 L1320,847.8 L1324.2,852.3" fill="none" stroke="#222" stroke-width="1.9"/><path d="M1527.6,843.3 L1531.8,847.8 L1527.6,852.3 M1532,843.3 L1536.2,847.8 L1532,852.3" fill="none" stroke="#222" stroke-width="1.9"/></svg>
<div class="t" style="left:1344.05px;top:836.50px;font-size:21.08px;line-height:23px;color:#2a2a2a;transform:scaleX(1.0946);-webkit-text-stroke:0.6px;">Back</div>
<div class="t" style="left:1450.84px;top:835.70px;font-size:22.24px;line-height:25px;color:#2a2a2a;transform:scaleX(1.1582);-webkit-text-stroke:0.6px;">Next</div>
</body></html>
